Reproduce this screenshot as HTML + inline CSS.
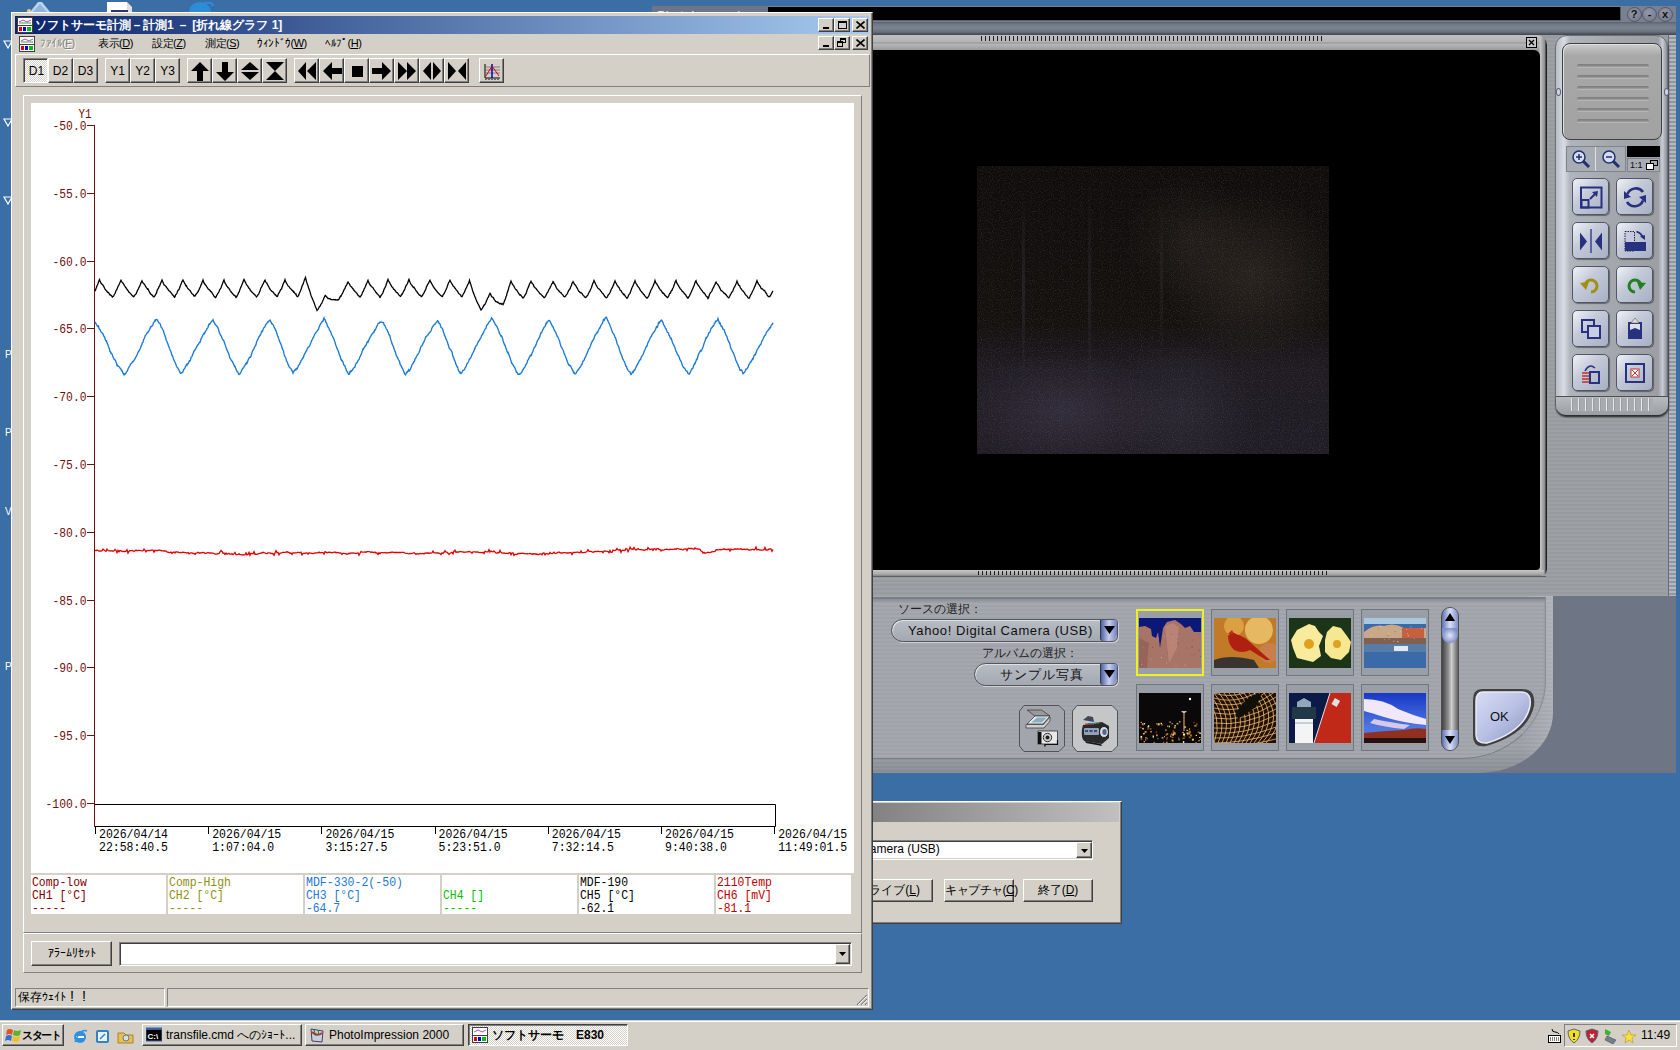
<!DOCTYPE html><html><head><meta charset="utf-8"><style>
*{margin:0;padding:0;box-sizing:border-box}
html,body{width:1680px;height:1050px;overflow:hidden;background:#3A6EA5;font-family:"Liberation Sans",sans-serif;font-size:12px;color:#000}
.a{position:absolute}
.face{background:#D4D0C8}
.raised{border-style:solid;border-width:1px;border-color:#fff #404040 #404040 #fff;box-shadow:inset -1px -1px #808080, inset 1px 1px #D4D0C8}
.btn{position:absolute;background:#D4D0C8;border:1px solid;border-color:#fff #404040 #404040 #fff;box-shadow:inset -1px -1px #808080}
.sunk{border:1px solid;border-color:#808080 #fff #fff #808080;box-shadow:inset 1px 1px #404040, inset -1px -1px #D4D0C8}
.thin{border:1px solid;border-color:#808080 #fff #fff #808080}
.mono{font-family:"Liberation Mono",monospace}
.tb{position:absolute;top:58px;width:25px;height:25px;background:#D4D0C8;border:1px solid;border-color:#fff #404040 #404040 #fff;box-shadow:inset -1px -1px #808080}
.tb svg{position:absolute;left:2px;top:2px}
.cap{position:absolute;width:16px;height:14px;background:#D4D0C8;border:1px solid;border-color:#fff #404040 #404040 #fff;box-shadow:inset -1px -1px #808080}
</style></head><body>
<svg class="a" style="left:0;top:0" width="660" height="14">
 <polygon points="30,12 38,2 42,2 50,12" fill="#B8D4F0"/><polygon points="33,12 40,4 47,12" fill="#8FB4E0"/>
 <circle cx="29" cy="11" r="2" fill="#E8D080"/>
 <rect x="107" y="2" width="20" height="10" fill="#fff"/><polygon points="127,2 132,7 132,12 127,12" fill="#E0E0E0"/>
 <rect x="111" y="10" width="17" height="2" fill="#303080"/>
 <path d="M189,12 A11,10 0 0 1 211,12 Z" fill="#2C8CD8"/><path d="M200,5 Q212,0 213,6" stroke="#2C8CD8" stroke-width="2" fill="none"/>
</svg>
<svg class="a" style="left:3px;top:39px" width="10" height="10"><path d="M1,2 H9 L5,9 Z" fill="none" stroke="#fff" stroke-width="1.2"/></svg><svg class="a" style="left:3px;top:117px" width="10" height="10"><path d="M1,2 H9 L5,9 Z" fill="none" stroke="#fff" stroke-width="1.2"/></svg><svg class="a" style="left:3px;top:195px" width="10" height="10"><path d="M1,2 H9 L5,9 Z" fill="none" stroke="#fff" stroke-width="1.2"/></svg><div class="a" style="left:5px;top:349px;color:#fff;font-size:10px;line-height:12px">P</div><div class="a" style="left:5px;top:427px;color:#fff;font-size:10px;line-height:12px">P</div><div class="a" style="left:5px;top:506px;color:#fff;font-size:10px;line-height:12px">V</div><div class="a" style="left:5px;top:661px;color:#fff;font-size:10px;line-height:12px">P</div><div class="a" style="left:652px;top:6px;width:117px;height:10px;background:#6E7686;color:#E0E0E0;font-size:13px;line-height:19px;padding-left:5px;overflow:hidden;white-space:nowrap">PhotoImpression</div><div class="a" style="left:768px;top:6px;width:908px;height:590px;background:repeating-linear-gradient(180deg,rgba(255,255,255,0.025) 0 2px,rgba(0,0,0,0.025) 2px 4px),#9B9EA3"></div><div class="a" style="left:768px;top:6px;width:908px;height:16px;background:#7A8090"></div><div class="a" style="left:768px;top:7px;width:853px;height:14px;background:#000;border-right:1px solid #505868;border-bottom:1px solid #5A6272"></div><div class="a" style="left:1626.5px;top:7px;width:15px;height:15px;border-radius:50%;background:radial-gradient(circle at 40% 35%,#9298A8,#707688);border:1px solid #505868;color:#101010;font-weight:bold;font-size:11px;line-height:13px;text-align:center">?</div><div class="a" style="left:1642.0px;top:7px;width:15px;height:15px;border-radius:50%;background:radial-gradient(circle at 40% 35%,#9298A8,#707688);border:1px solid #505868;color:#101010;font-weight:bold;font-size:11px;line-height:13px;text-align:center">-</div><div class="a" style="left:1657.5px;top:7px;width:15px;height:15px;border-radius:50%;background:radial-gradient(circle at 40% 35%,#9298A8,#707688);border:1px solid #505868;color:#101010;font-weight:bold;font-size:11px;line-height:13px;text-align:center">x</div><div class="a" style="left:768px;top:22px;width:908px;height:13px;background:linear-gradient(#5A606C 0,#6E7684 15%,#7C8490 45%,#6A7280 75%,#3E444E 100%)"></div><div class="a" style="left:768px;top:35px;width:779px;height:542px;border-radius:0 10px 8px 0;background:linear-gradient(90deg,rgba(0,0,0,0) 0,rgba(0,0,0,0) 771px,#C8C8C8 772px,#8A8A8A 777px,#202020 778px),linear-gradient(#C0C0C0 0,#B4B4B4 7px,#909090 8px,#B8B8B8 9px,#9A9A9A 15px)"></div><div class="a" style="left:768px;top:50px;width:772px;height:520px;background:#000;border-radius:0 6px 4px 0"></div><div class="a" style="left:768px;top:570px;width:776px;height:7px;background:linear-gradient(#C8C8C8,#A8A8A8 60%,#707070);border-radius:0 0 6px 0"></div><div class="a" style="left:981px;top:36px;width:343px;height:5px;background:repeating-linear-gradient(90deg,#202020 0 1px,transparent 1px 4px)"></div><div class="a" style="left:978px;top:571px;width:352px;height:4px;background:repeating-linear-gradient(90deg,#202020 0 1px,transparent 1px 4px)"></div><svg class="a" style="left:1526px;top:37px" width="12" height="11"><rect x="0.5" y="0.5" width="10" height="10" fill="#C8C8C8" stroke="#000"/><path d="M3,3 L8,8 M8,3 L3,8" stroke="#000" stroke-width="1.3"/></svg><div class="a" style="left:977px;top:166px;width:352px;height:288px;background:radial-gradient(ellipse 30% 20% at 25% 85%,rgba(64,58,78,0.55),rgba(0,0,0,0)),radial-gradient(ellipse 20% 25% at 58% 85%,rgba(56,52,68,0.45),rgba(0,0,0,0)),radial-gradient(ellipse 25% 30% at 78% 38%,rgba(54,46,40,0.6),rgba(0,0,0,0)),radial-gradient(ellipse 18% 22% at 60% 25%,rgba(44,38,34,0.5),rgba(0,0,0,0)),linear-gradient(#0E0B0A,#13100E 55%,#1E1A20 70%,#201C24)"></div><svg class="a" style="left:977px;top:166px" width="352" height="288"><filter id="nz"><feTurbulence type="fractalNoise" baseFrequency="0.9" numOctaves="1" seed="3"/><feColorMatrix values="0 0 0 0 0.3  0 0 0 0 0.28  0 0 0 0 0.34  0 0 0 1.6 -0.75"/></filter><rect width="352" height="288" filter="url(#nz)" opacity="0.35"/></svg><div class="a" style="left:1022px;top:190px;width:3px;height:200px;background:linear-gradient(rgba(60,66,80,0),rgba(60,66,80,0.35),rgba(60,66,80,0))"></div><div class="a" style="left:1088px;top:175px;width:3px;height:230px;background:linear-gradient(rgba(60,60,70,0),rgba(60,60,70,0.3),rgba(60,60,70,0))"></div><div class="a" style="left:1160px;top:200px;width:3px;height:160px;background:linear-gradient(rgba(60,55,50,0),rgba(60,55,50,0.3),rgba(60,55,50,0))"></div><div class="a" style="left:1668px;top:35px;width:1px;height:561px;background:#6A6E76"></div><div class="a" style="left:1669px;top:35px;width:7px;height:561px;background:repeating-linear-gradient(180deg,#B4B8C0 0 2px,#9098A0 2px 4px)"></div><div class="a" style="left:1555px;top:35px;width:113px;height:380px;border-radius:12px 12px 10px 10px;background:linear-gradient(90deg,#B8BCC4,#D8DCE4 8px,#B0B4BC 14px,#A4A8AE 50%,#9C9EA4 92%,#C8CCD4 96%,#888C94);border:1px solid #707070;box-shadow:1px 2px 2px rgba(0,0,0,0.45)"></div><div class="a" style="left:1562px;top:43px;width:100px;height:97px;border-radius:8px;background:linear-gradient(#CCCCCC,#A8A8A8 12%,#A2A2A2);border:1px solid #404040;box-shadow:inset 1px 1px #E0E0E0"></div><div class="a" style="left:1577px;top:64px;width:72px;height:4px;border-radius:2px;background:linear-gradient(#7C7C7C,#8C8C8C 50%,#C4C4C4)"></div><div class="a" style="left:1577px;top:75px;width:72px;height:4px;border-radius:2px;background:linear-gradient(#7C7C7C,#8C8C8C 50%,#C4C4C4)"></div><div class="a" style="left:1577px;top:86px;width:72px;height:4px;border-radius:2px;background:linear-gradient(#7C7C7C,#8C8C8C 50%,#C4C4C4)"></div><div class="a" style="left:1577px;top:97px;width:72px;height:4px;border-radius:2px;background:linear-gradient(#7C7C7C,#8C8C8C 50%,#C4C4C4)"></div><div class="a" style="left:1577px;top:108px;width:72px;height:4px;border-radius:2px;background:linear-gradient(#7C7C7C,#8C8C8C 50%,#C4C4C4)"></div><div class="a" style="left:1577px;top:119px;width:72px;height:4px;border-radius:2px;background:linear-gradient(#7C7C7C,#8C8C8C 50%,#C4C4C4)"></div><div class="a" style="left:1556px;top:88px;width:5px;height:8px;border-radius:50%;background:#D0D4E8;border:1px solid #606070"></div><div class="a" style="left:1664px;top:88px;width:5px;height:8px;border-radius:50%;background:#D0D4E8;border:1px solid #606070"></div><div class="a" style="left:1566px;top:146px;width:60px;height:26px;background:#A8ACB4;border:1px solid #80848C"></div><div class="a" style="left:1595px;top:147px;width:1px;height:24px;background:#E0E0E0"></div><svg class="a" style="left:1568px;top:148px" width="58" height="24"><g fill="none" stroke="#203070" stroke-width="1.5"><circle cx="11" cy="9" r="6" fill="#D8DCF0"/><path d="M15,13 L21,19" stroke-width="3"/><path d="M8,9 H14 M11,6 V12"/><circle cx="41" cy="9" r="6" fill="#D8DCF0"/><path d="M45,13 L51,19" stroke-width="3"/><path d="M38,9 H44"/></g></svg><div class="a" style="left:1627px;top:146px;width:33px;height:11px;background:#000"></div><div class="a" style="left:1627px;top:158px;width:33px;height:14px;background:#A8ACB4;border:1px solid #80848C;font-size:9px;line-height:12px;color:#101010;padding-left:2px">1:1</div><svg class="a" style="left:1646px;top:160px" width="12" height="10"><rect x="4.5" y="0.5" width="7" height="5" fill="none" stroke="#000"/><rect x="0.5" y="3.5" width="7" height="6" fill="#fff" stroke="#000" stroke-width="1"/></svg><div class="a" style="left:1572px;top:178px;width:37px;height:37px;border-radius:5px;background:linear-gradient(135deg,#F0F2F8,#C4CAD8 40%,#A8B0C4);border:1px solid #505868;box-shadow:1px 1px 1px rgba(0,0,0,0.4)"><svg class="a" style="left:4px;top:4px" width="28" height="28"><rect x="4" y="4.5" width="20.5" height="20" fill="none" stroke="#283080" stroke-width="2"/><rect x="4.5" y="17" width="7" height="7.5" fill="none" stroke="#283080" stroke-width="2"/><path d="M13,16 L19.5,9.5" stroke="#283080" stroke-width="2"/><path d="M21,8 L15,9 L20,14 Z" fill="#283080"/></svg></div><div class="a" style="left:1616px;top:178px;width:37px;height:37px;border-radius:5px;background:linear-gradient(135deg,#F0F2F8,#C4CAD8 40%,#A8B0C4);border:1px solid #505868;box-shadow:1px 1px 1px rgba(0,0,0,0.4)"><svg class="a" style="left:4px;top:4px" width="28" height="28"><path d="M6.5,11 A9,9 0 0 1 22,9" stroke="#283080" stroke-width="2.6" fill="none"/><path d="M22,17.5 A9,9 0 0 1 6,19" stroke="#283080" stroke-width="2.6" fill="none"/><path d="M3,8 L10,14 L3,16 Z M25,20 L18,14 L25,12 Z" fill="#283080"/></svg></div><div class="a" style="left:1572px;top:222px;width:37px;height:37px;border-radius:5px;background:linear-gradient(135deg,#F0F2F8,#C4CAD8 40%,#A8B0C4);border:1px solid #505868;box-shadow:1px 1px 1px rgba(0,0,0,0.4)"><svg class="a" style="left:4px;top:4px" width="28" height="28"><path d="M3,5.5 L10,14.5 L3,23.5 Z M25,5.5 L18,14.5 L25,23.5 Z" fill="#283080"/><path d="M14,2 V26" stroke="#283080" stroke-width="1.3"/></svg></div><div class="a" style="left:1616px;top:222px;width:37px;height:37px;border-radius:5px;background:linear-gradient(135deg,#F0F2F8,#C4CAD8 40%,#A8B0C4);border:1px solid #505868;box-shadow:1px 1px 1px rgba(0,0,0,0.4)"><svg class="a" style="left:4px;top:4px" width="28" height="28"><rect x="4" y="4.5" width="9.5" height="19.5" fill="#C8C8E0" stroke="#101030" stroke-width="0.9" stroke-dasharray="1.5 1"/><rect x="4" y="15" width="21" height="9" fill="#283080"/><path d="M15.5,4.5 Q20,6 22,10" stroke="#283080" stroke-width="1.8" fill="none"/><path d="M24,13 L19,9.5 L24,8 Z" fill="#283080"/></svg></div><div class="a" style="left:1572px;top:266px;width:37px;height:37px;border-radius:5px;background:linear-gradient(135deg,#F0F2F8,#C4CAD8 40%,#A8B0C4);border:1px solid #505868;box-shadow:1px 1px 1px rgba(0,0,0,0.4)"><svg class="a" style="left:4px;top:4px" width="28" height="28"><path d="M8,15 A6,6 0 1 1 14,21" stroke="#A09010" stroke-width="3" fill="none"/><path d="M3,12 L9,19 L12,11 Z" fill="#A09010"/></svg></div><div class="a" style="left:1616px;top:266px;width:37px;height:37px;border-radius:5px;background:linear-gradient(135deg,#F0F2F8,#C4CAD8 40%,#A8B0C4);border:1px solid #505868;box-shadow:1px 1px 1px rgba(0,0,0,0.4)"><svg class="a" style="left:4px;top:4px" width="28" height="28"><path d="M20,15 A6,6 0 1 0 14,21" stroke="#208020" stroke-width="3" fill="none"/><path d="M25,12 L19,19 L16,11 Z" fill="#208020"/></svg></div><div class="a" style="left:1572px;top:310px;width:37px;height:37px;border-radius:5px;background:linear-gradient(135deg,#F0F2F8,#C4CAD8 40%,#A8B0C4);border:1px solid #505868;box-shadow:1px 1px 1px rgba(0,0,0,0.4)"><svg class="a" style="left:4px;top:4px" width="28" height="28"><rect x="5" y="5" width="12" height="12" fill="none" stroke="#283080" stroke-width="2"/><rect x="11" y="11" width="12" height="12" fill="#C8CCE4" stroke="#283080" stroke-width="2"/></svg></div><div class="a" style="left:1616px;top:310px;width:37px;height:37px;border-radius:5px;background:linear-gradient(135deg,#F0F2F8,#C4CAD8 40%,#A8B0C4);border:1px solid #505868;box-shadow:1px 1px 1px rgba(0,0,0,0.4)"><svg class="a" style="left:4px;top:4px" width="28" height="28"><rect x="7" y="7" width="14" height="17" fill="#283080"/><polygon points="9,9 19,9 19,15 14,13 9,15" fill="#E0E0E8"/><polygon points="10,8 14,3 18,8" fill="#E0E0E0" stroke="#707070" stroke-width="0.7"/></svg></div><div class="a" style="left:1572px;top:354px;width:37px;height:37px;border-radius:5px;background:linear-gradient(135deg,#F0F2F8,#C4CAD8 40%,#A8B0C4);border:1px solid #505868;box-shadow:1px 1px 1px rgba(0,0,0,0.4)"><svg class="a" style="left:4px;top:4px" width="28" height="28"><rect x="13" y="13" width="9" height="11" fill="none" stroke="#283080" stroke-width="2"/><path d="M5,14 H12 M5,17 H12 M5,20 H12 M5,23 H12" stroke="#C03030" stroke-width="1.5"/><path d="M8,12 Q12,4 18,9" stroke="#283080" stroke-width="1.5" fill="none"/></svg></div><div class="a" style="left:1616px;top:354px;width:37px;height:37px;border-radius:5px;background:linear-gradient(135deg,#F0F2F8,#C4CAD8 40%,#A8B0C4);border:1px solid #505868;box-shadow:1px 1px 1px rgba(0,0,0,0.4)"><svg class="a" style="left:4px;top:4px" width="28" height="28"><rect x="5" y="5" width="18" height="18" fill="none" stroke="#283080" stroke-width="2"/><rect x="10" y="10" width="8" height="8" fill="#fff" stroke="#C03030"/><path d="M11,11 L17,17 M17,11 L11,17" stroke="#C03030"/></svg></div><div class="a" style="left:1556px;top:396px;width:112px;height:19px;border-radius:0 0 10px 10px;background:linear-gradient(#B8BCC0,#9A9EA2);border-top:1px solid #505050;box-shadow:0 2px 2px rgba(0,0,0,0.5)"></div><div class="a" style="left:1571px;top:398px;width:82px;height:13px;background:repeating-linear-gradient(90deg,#E8E8E8 0 1px,#9A9EA2 1px 2px,#A8ACB0 2px 7px)"></div><div class="a" style="left:1380px;top:596px;width:296px;height:177px;background:#6E7585"></div><div class="a" style="left:768px;top:596px;width:785px;height:177px;border-radius:0 0 75px 0 / 0 0 60px 0;background:repeating-linear-gradient(180deg,rgba(255,255,255,0.025) 0 2px,rgba(0,0,0,0.025) 2px 4px),linear-gradient(90deg,rgba(0,0,0,0) 96%,rgba(255,255,255,0.15)),linear-gradient(#A4A8AE,#9EA2A8 85%,#8A8E96)"></div><div class="a" style="left:768px;top:597px;width:778px;height:162px;border-radius:0 0 85px 0 / 0 0 78px 0;background:repeating-linear-gradient(180deg,rgba(255,255,255,0.025) 0 2px,rgba(0,0,0,0.025) 2px 4px),#A3A6AC;border-top:2px solid #7A7E86;border-bottom:1px solid #7A7E86;border-right:1px solid #8A8E96;box-shadow:inset 0 2px 2px rgba(0,0,0,0.15)"></div><div class="a" style="left:768px;top:576px;width:778px;height:1px;background:#606060"></div><div class="a" style="left:898px;top:602px;font-size:12px;line-height:14px;color:#202020;white-space:nowrap">ソースの選択：</div><div class="a" style="left:891px;top:619px;width:227px;height:23px;border-radius:12px 4px 6px 12px;background:linear-gradient(#B8BCC4,#A4A8B0);border:1px solid #505560;box-shadow:inset 1px 1px #E0E0E0, 1px 1px #D0D0D0;font-size:13px;line-height:21px;padding-left:16px;letter-spacing:0.6px;color:#101010;white-space:nowrap">Yahoo! Digital Camera (USB)</div><div class="a" style="left:982px;top:646px;font-size:12px;line-height:14px;color:#202020;white-space:nowrap">アルバムの選択：</div><div class="a" style="left:974px;top:663px;width:144px;height:23px;border-radius:12px 4px 6px 12px;background:linear-gradient(#B8BCC4,#A4A8B0);border:1px solid #505560;box-shadow:inset 1px 1px #E0E0E0, 1px 1px #D0D0D0;font-size:13px;line-height:21px;padding-left:25px;letter-spacing:1px;color:#101010;white-space:nowrap">サンプル写真</div><div class="a" style="left:1100px;top:620px;width:17px;height:21px;border-radius:0 3px 8px 3px;background:linear-gradient(90deg,#5060A0,#C8D0F0 50%,#7080C0);border-left:1px solid #303848"><svg class="a" style="left:3px;top:6px" width="11" height="8"><path d="M0,0 H11 L5.5,8 Z" fill="#000"/></svg></div><div class="a" style="left:1100px;top:664px;width:17px;height:21px;border-radius:0 3px 8px 3px;background:linear-gradient(90deg,#5060A0,#C8D0F0 50%,#7080C0);border-left:1px solid #303848"><svg class="a" style="left:3px;top:6px" width="11" height="8"><path d="M0,0 H11 L5.5,8 Z" fill="#000"/></svg></div><svg class="a" style="left:1019px;top:705px" width="46" height="47"><path d="M5,0.5 H40 L45.5,6 V41 L40,46.5 H5 L0.5,41 V6 Z" fill="#A2A6AC" stroke="#505458"/><polygon points="8,5 22.5,5 31,11 16,11" fill="#9A9A9A" stroke="#404040" stroke-width="0.8"/><polygon points="16,11 31,11 24,19 8,19" fill="#E8ECEE" stroke="#404040" stroke-width="0.8"/><polygon points="18,12.5 28,12.5 23,17.5 12,17.5" fill="#8AB0C0"/><path d="M7,19.5 H24.5 L31,12 V16 L25,23 H7 Z" fill="#D0D0D0" stroke="#404040" stroke-width="0.8"/><rect x="19" y="26" width="19.5" height="13" fill="#E8E8E8" stroke="#303030" stroke-width="0.8"/><rect x="19" y="27" width="3.5" height="12" fill="#101010"/><circle cx="28.5" cy="32.5" r="4.2" fill="#D0D0D0" stroke="#303030"/><circle cx="28.5" cy="32.5" r="2" fill="#202020"/><path d="M38.5,35 V39.5 H26 V41 H25" stroke="#101010" fill="none" stroke-width="1.2"/></svg><svg class="a" style="left:1072px;top:705px" width="46" height="47"><path d="M5,0.5 H40 L45.5,6 V41 L40,46.5 H5 L0.5,41 V6 Z" fill="#C4C6C8" stroke="#505458"/><path d="M11,20 L30,17 L37,21 L37,33 L30,39 L12,36 Q9,33 10,24 Z" fill="#2A2A2A"/><rect x="12" y="23" width="15" height="7" rx="1" fill="#90A0B8"/><path d="M13,26 H26" stroke="#203060" stroke-width="1.5" stroke-dasharray="3 1.5"/><ellipse cx="32" cy="27" rx="4.5" ry="5.5" fill="#D8DCE4" stroke="#202020"/><ellipse cx="32.5" cy="27" rx="2.2" ry="3" fill="#506890"/><path d="M11,15 L16,11 L21,12 L22,17 Z" fill="#404850"/><path d="M13,19 H22" stroke="#C04040" stroke-width="1.2"/><path d="M16,18.5 H24" stroke="#4070C0" stroke-width="1"/><path d="M22,18 H27" stroke="#40A040" stroke-width="1"/><path d="M13,36 L29,39 L30,41 L14,38 Z" fill="#181818"/></svg><div class="a" style="left:1136px;top:609px;width:68px;height:67px;background:#9A9EA6;border:2px solid #F0F020"></div><svg class="a" style="left:1139px;top:618px" width="62" height="50"><rect width="62" height="50" fill="#0C1878"/><path d="M0,9 L6,8 L12,11 L13,18 L17,20 L19,14 L21,30 L24,10 L28,4 L36,2 L42,6 L46,10 L51,8 L55,14 L62,14 V50 H0 Z" fill="#A87468"/><path d="M26,8 L34,5 L40,10 L38,30 L30,45 Z" fill="#C08A7C" opacity="0.7"/><path d="M0,20 L10,25 L8,50 H0 Z" fill="#8A5A50" opacity="0.6"/><rect x="28.0" y="34.6" width="1.1" height="0.8" fill="#905C50"/><rect x="53.0" y="21.6" width="1.1" height="0.8" fill="#905C50"/><rect x="49.2" y="18.3" width="0.7" height="0.6" fill="#905C50"/><rect x="39.3" y="35.8" width="0.8" height="0.8" fill="#905C50"/><rect x="38.2" y="20.5" width="0.5" height="0.9" fill="#7A4A40"/><rect x="2.2" y="45.8" width="0.9" height="1.0" fill="#D0A090"/><rect x="27.3" y="44.5" width="0.9" height="0.9" fill="#D0A090"/><rect x="0.3" y="18.0" width="1.0" height="0.8" fill="#905C50"/><rect x="61.7" y="44.4" width="1.0" height="0.7" fill="#7A4A40"/><rect x="31.8" y="16.0" width="0.9" height="0.6" fill="#7A4A40"/><rect x="52.5" y="28.5" width="1.2" height="1.1" fill="#7A4A40"/><rect x="13.2" y="47.4" width="0.5" height="0.8" fill="#905C50"/><rect x="24.6" y="17.6" width="0.9" height="1.0" fill="#D0A090"/><rect x="20.9" y="25.9" width="0.5" height="0.8" fill="#7A4A40"/><rect x="8.3" y="39.7" width="0.5" height="0.8" fill="#D0A090"/><rect x="11.0" y="34.6" width="0.8" height="0.6" fill="#905C50"/><rect x="47.7" y="29.7" width="0.8" height="0.8" fill="#7A4A40"/><rect x="0.0" y="45.3" width="1.2" height="0.9" fill="#7A4A40"/><rect x="13.1" y="28.8" width="1.1" height="0.9" fill="#7A4A40"/><rect x="2.6" y="20.1" width="0.8" height="0.5" fill="#905C50"/><rect x="20.4" y="25.4" width="0.6" height="0.6" fill="#905C50"/><rect x="39.5" y="15.5" width="0.8" height="0.9" fill="#7A4A40"/><rect x="59.5" y="31.9" width="0.9" height="1.1" fill="#7A4A40"/><rect x="38.9" y="25.9" width="0.7" height="0.9" fill="#905C50"/><rect x="11.8" y="40.9" width="1.2" height="0.6" fill="#D0A090"/><rect x="54.7" y="36.1" width="0.8" height="0.6" fill="#7A4A40"/><rect x="31.8" y="23.9" width="1.0" height="0.8" fill="#D0A090"/><rect x="51.1" y="35.9" width="0.7" height="0.6" fill="#905C50"/><rect x="60.6" y="19.4" width="0.8" height="1.0" fill="#905C50"/><rect x="38.1" y="24.8" width="1.1" height="0.6" fill="#7A4A40"/><rect x="4.3" y="29.4" width="0.7" height="0.5" fill="#D0A090"/><rect x="22.9" y="35.0" width="0.6" height="0.8" fill="#D0A090"/><rect x="60.8" y="38.0" width="1.0" height="0.9" fill="#7A4A40"/><rect x="36.6" y="47.3" width="0.8" height="0.8" fill="#D0A090"/><rect x="59.7" y="15.7" width="0.9" height="0.8" fill="#905C50"/><rect x="19.3" y="19.8" width="0.6" height="0.8" fill="#D0A090"/><rect x="45.7" y="46.5" width="1.0" height="1.0" fill="#D0A090"/><rect x="21.8" y="39.0" width="1.1" height="1.1" fill="#D0A090"/><rect x="58.5" y="16.1" width="0.8" height="0.5" fill="#905C50"/><rect x="23.7" y="35.4" width="0.9" height="0.6" fill="#905C50"/></svg><div class="a" style="left:1211px;top:609px;width:68px;height:67px;background:#9A9EA6;border:1px solid #70747C"></div><svg class="a" style="left:1214px;top:618px" width="62" height="50"><rect width="62" height="50" fill="#C07A28"/><circle cx="45" cy="12" r="14" fill="#F0C870" opacity="0.8"/><circle cx="20" cy="8" r="10" fill="#E8B050" opacity="0.7"/><circle cx="55" cy="35" r="10" fill="#D08060" opacity="0.6"/><path d="M0,42 Q15,36 40,42 L45,50 H0 Z" fill="#3A3430"/><path d="M14,18 Q18,12 22,16 Q30,18 38,26 L56,42 L52,42 L36,32 Q28,36 20,32 Q14,26 14,18 Z" fill="#B02010"/><path d="M14,16 L18,12 L20,16 Z" fill="#C02818"/></svg><div class="a" style="left:1286px;top:609px;width:68px;height:67px;background:#9A9EA6;border:1px solid #70747C"></div><svg class="a" style="left:1289px;top:618px" width="62" height="50"><rect width="62" height="50" fill="#1C3418"/><path d="M20,6 L26,8 L30,14 L34,18 L30,28 L32,38 L24,44 L16,42 L8,40 L4,30 L2,22 L8,12 Z" fill="#F8EC9C"/><path d="M44,8 L52,10 L58,18 L62,24 L60,34 L52,42 L42,40 L36,34 L36,22 L38,14 Z" fill="#F6E890"/><circle cx="20" cy="26" r="5" fill="#E0A020"/><circle cx="48" cy="26" r="4" fill="#E0A020"/></svg><div class="a" style="left:1361px;top:609px;width:68px;height:67px;background:#9A9EA6;border:1px solid #70747C"></div><svg class="a" style="left:1364px;top:618px" width="62" height="50"><rect width="62" height="50" fill="#3A6AA8"/><rect width="62" height="6" fill="#A8C8E0"/><path d="M0,14 Q10,6 20,8 Q30,4 40,10 L62,10 V24 H0 Z" fill="#C8A888"/><rect x="38" y="10" width="22" height="12" fill="#C86040"/><rect x="0" y="20" width="62" height="6" fill="#806050"/><path d="M0,26 H62 V34 H0 Z" fill="#6080A8" opacity="0.8"/><rect x="30" y="28" width="14" height="5" fill="#E0E8F0"/><rect x="7.2" y="12.1" width="0.8" height="0.7" fill="#E0C0A0"/><rect x="43.0" y="15.3" width="0.8" height="0.9" fill="#E0C0A0"/><rect x="46.5" y="8.5" width="0.9" height="0.8" fill="#F0E0C0"/><rect x="59.4" y="9.8" width="1.0" height="1.0" fill="#A07050"/><rect x="15.9" y="8.2" width="0.7" height="1.0" fill="#F0E0C0"/><rect x="32.1" y="20.1" width="0.7" height="1.2" fill="#A07050"/><rect x="55.3" y="13.2" width="1.0" height="0.6" fill="#A07050"/><rect x="49.8" y="20.1" width="0.6" height="0.6" fill="#F0E0C0"/><rect x="36.2" y="13.1" width="0.6" height="0.8" fill="#F0E0C0"/><rect x="44.1" y="23.2" width="0.7" height="0.6" fill="#A07050"/><rect x="29.2" y="22.8" width="1.1" height="0.8" fill="#E0C0A0"/><rect x="30.6" y="13.0" width="1.1" height="1.2" fill="#A07050"/><rect x="19.9" y="21.3" width="0.7" height="0.9" fill="#E0C0A0"/><rect x="43.9" y="17.1" width="0.7" height="1.1" fill="#F0E0C0"/><rect x="39.7" y="14.5" width="0.6" height="1.0" fill="#A07050"/><rect x="14.7" y="10.3" width="0.5" height="0.9" fill="#A07050"/><rect x="6.8" y="16.6" width="0.9" height="0.8" fill="#F0E0C0"/><rect x="42.4" y="11.2" width="0.8" height="0.6" fill="#F0E0C0"/><rect x="46.8" y="16.6" width="0.5" height="0.7" fill="#A07050"/><rect x="33.5" y="23.1" width="0.9" height="1.2" fill="#F0E0C0"/><rect x="24.4" y="20.7" width="1.1" height="0.6" fill="#E0C0A0"/><rect x="24.1" y="15.2" width="0.6" height="1.1" fill="#F0E0C0"/><rect x="23.4" y="17.1" width="1.1" height="1.1" fill="#A07050"/><rect x="28.7" y="18.4" width="0.6" height="1.0" fill="#E0C0A0"/><rect x="57.3" y="10.0" width="0.7" height="0.8" fill="#F0E0C0"/></svg><div class="a" style="left:1136px;top:684px;width:68px;height:67px;background:#9A9EA6;border:1px solid #70747C"></div><svg class="a" style="left:1139px;top:693px" width="62" height="50"><rect width="62" height="50" fill="#0A0808"/><circle cx="51" cy="6" r="1.2" fill="#fff"/><path d="M42,18 H48 L46,20 H44 Z" fill="#C0C0A0"/><rect x="44" y="20" width="2" height="18" fill="#806040"/><rect x="60.6" y="39.8" width="1.9" height="1.2" fill="#F0C040"/><rect x="21.6" y="29.8" width="1.4" height="1.6" fill="#FFF0A0"/><rect x="30.2" y="28.6" width="1.9" height="0.9" fill="#F0C040"/><rect x="10.7" y="35.4" width="1.9" height="1.0" fill="#E08020"/><rect x="62.0" y="47.8" width="1.5" height="1.7" fill="#A06010"/><rect x="58.6" y="38.8" width="2.1" height="0.9" fill="#E08020"/><rect x="27.2" y="40.3" width="2.0" height="1.6" fill="#E08020"/><rect x="32.4" y="46.6" width="1.6" height="1.2" fill="#A06010"/><rect x="59.2" y="47.1" width="1.7" height="1.2" fill="#E08020"/><rect x="60.0" y="39.5" width="1.6" height="1.1" fill="#F0C040"/><rect x="31.2" y="41.3" width="0.8" height="2.2" fill="#A06010"/><rect x="33.7" y="49.8" width="1.0" height="0.9" fill="#E08020"/><rect x="4.1" y="39.9" width="1.4" height="2.1" fill="#A06010"/><rect x="16.7" y="38.4" width="1.0" height="1.4" fill="#A06010"/><rect x="32.5" y="30.4" width="1.4" height="0.8" fill="#FFF0A0"/><rect x="8.0" y="45.1" width="0.8" height="1.1" fill="#E08020"/><rect x="0.7" y="34.2" width="1.8" height="1.1" fill="#A06010"/><rect x="6.5" y="44.1" width="1.0" height="1.5" fill="#FFF0A0"/><rect x="44.5" y="43.4" width="2.0" height="0.8" fill="#A06010"/><rect x="51.2" y="41.5" width="1.6" height="2.0" fill="#E08020"/><rect x="32.8" y="46.7" width="1.7" height="2.0" fill="#E08020"/><rect x="56.7" y="41.8" width="1.3" height="1.1" fill="#FFF0A0"/><rect x="55.2" y="32.3" width="1.9" height="1.1" fill="#F0C040"/><rect x="8.3" y="33.3" width="1.8" height="1.2" fill="#F0C040"/><rect x="27.0" y="48.7" width="1.6" height="1.8" fill="#E08020"/><rect x="25.0" y="43.1" width="0.8" height="1.1" fill="#FFF0A0"/><rect x="56.5" y="49.3" width="1.0" height="1.5" fill="#FFF0A0"/><rect x="31.2" y="43.1" width="1.1" height="0.9" fill="#F0C040"/><rect x="1.5" y="44.8" width="1.7" height="2.1" fill="#A06010"/><rect x="9.1" y="32.1" width="1.1" height="2.0" fill="#FFF0A0"/><rect x="57.5" y="30.1" width="0.9" height="2.1" fill="#A06010"/><rect x="4.8" y="30.1" width="1.3" height="1.4" fill="#FFF0A0"/><rect x="26.7" y="41.2" width="0.8" height="1.8" fill="#E08020"/><rect x="11.2" y="38.0" width="1.8" height="1.4" fill="#E08020"/><rect x="37.5" y="30.1" width="1.9" height="1.3" fill="#F0C040"/><rect x="49.7" y="43.5" width="2.0" height="1.7" fill="#A06010"/><rect x="35.3" y="32.2" width="1.6" height="1.3" fill="#FFF0A0"/><rect x="17.3" y="30.6" width="1.8" height="1.0" fill="#A06010"/><rect x="8.3" y="35.3" width="1.6" height="1.3" fill="#A06010"/><rect x="47.4" y="36.9" width="1.8" height="0.9" fill="#FFF0A0"/><rect x="18.7" y="30.2" width="2.0" height="2.2" fill="#F0C040"/><rect x="14.4" y="48.8" width="1.7" height="1.3" fill="#A06010"/><rect x="35.3" y="39.7" width="1.3" height="2.2" fill="#E08020"/><rect x="43.5" y="44.8" width="2.2" height="0.8" fill="#F0C040"/><rect x="45.8" y="33.6" width="1.4" height="0.9" fill="#E08020"/><rect x="40.2" y="28.2" width="1.2" height="1.2" fill="#FFF0A0"/><rect x="34.1" y="39.2" width="2.2" height="1.6" fill="#F0C040"/><rect x="39.6" y="45.8" width="0.9" height="1.6" fill="#F0C040"/><rect x="24.0" y="48.6" width="1.3" height="2.2" fill="#A06010"/><rect x="33.6" y="41.1" width="1.4" height="1.5" fill="#FFF0A0"/><rect x="32.7" y="41.2" width="1.3" height="1.2" fill="#FFF0A0"/><rect x="34.8" y="34.2" width="1.8" height="1.2" fill="#F0C040"/><rect x="47.9" y="40.9" width="1.7" height="1.4" fill="#A06010"/><rect x="3.3" y="34.9" width="1.4" height="1.6" fill="#FFF0A0"/><rect x="4.6" y="47.9" width="1.4" height="1.5" fill="#E08020"/><rect x="2.8" y="30.2" width="1.9" height="2.1" fill="#E08020"/><rect x="60.7" y="46.0" width="1.6" height="1.0" fill="#A06010"/><rect x="28.3" y="32.5" width="0.9" height="1.5" fill="#F0C040"/><rect x="22.5" y="31.1" width="1.4" height="1.6" fill="#A06010"/><rect x="22.6" y="44.4" width="1.9" height="1.0" fill="#FFF0A0"/><rect x="45.5" y="33.2" width="1.0" height="2.0" fill="#FFF0A0"/><rect x="17.0" y="41.4" width="1.8" height="1.8" fill="#E08020"/><rect x="39.3" y="44.6" width="1.1" height="1.1" fill="#E08020"/><rect x="54.5" y="28.9" width="0.9" height="1.2" fill="#A06010"/><rect x="1.7" y="28.8" width="1.1" height="1.2" fill="#F0C040"/><rect x="56.6" y="31.5" width="1.1" height="2.2" fill="#A06010"/><rect x="29.7" y="32.6" width="1.3" height="1.8" fill="#F0C040"/><rect x="49.7" y="37.8" width="2.0" height="2.0" fill="#E08020"/><rect x="27.5" y="44.4" width="1.3" height="1.0" fill="#E08020"/><rect x="40.5" y="49.8" width="1.3" height="1.6" fill="#E08020"/><rect x="26.5" y="36.1" width="0.9" height="2.0" fill="#F0C040"/><rect x="33.7" y="37.5" width="1.6" height="1.9" fill="#A06010"/><rect x="18.5" y="45.1" width="0.9" height="1.1" fill="#F0C040"/><rect x="43.1" y="38.9" width="1.9" height="1.3" fill="#E08020"/><rect x="13.6" y="42.5" width="1.3" height="2.1" fill="#FFF0A0"/><rect x="44.0" y="40.5" width="2.1" height="2.1" fill="#FFF0A0"/><rect x="27.2" y="45.7" width="1.2" height="1.2" fill="#A06010"/><rect x="60.0" y="44.1" width="1.5" height="0.9" fill="#FFF0A0"/><rect x="1.5" y="42.9" width="1.6" height="1.9" fill="#FFF0A0"/><rect x="49.4" y="39.9" width="2.0" height="1.6" fill="#E08020"/><rect x="5.6" y="38.0" width="2.0" height="1.9" fill="#E08020"/><rect x="32.0" y="40.0" width="1.6" height="2.2" fill="#A06010"/><rect x="4.0" y="40.0" width="1.9" height="0.9" fill="#F0C040"/><rect x="17.0" y="30.3" width="1.2" height="0.8" fill="#E08020"/><rect x="6.0" y="46.0" width="1.4" height="1.8" fill="#A06010"/><rect x="47.5" y="39.5" width="1.9" height="1.4" fill="#FFF0A0"/><rect x="50.1" y="35.3" width="1.0" height="1.5" fill="#F0C040"/><rect x="43.9" y="48.1" width="1.4" height="2.0" fill="#FFF0A0"/><rect x="52.9" y="45.7" width="2.0" height="2.0" fill="#F0C040"/><rect x="32.5" y="43.6" width="1.9" height="1.4" fill="#A06010"/></svg><div class="a" style="left:1211px;top:684px;width:68px;height:67px;background:#9A9EA6;border:1px solid #70747C"></div><svg class="a" style="left:1214px;top:693px" width="62" height="50"><rect width="62" height="50" fill="#201008"/><path d="M-10,0 Q10,25 0,50" stroke="#E8A850" stroke-width="0.9" fill="none"/><path d="M-5,0 Q15,25 4,50" stroke="#E8A850" stroke-width="0.9" fill="none"/><path d="M0,0 Q20,25 8,50" stroke="#E8A850" stroke-width="0.9" fill="none"/><path d="M5,0 Q25,25 12,50" stroke="#E8A850" stroke-width="0.9" fill="none"/><path d="M10,0 Q30,25 16,50" stroke="#E8A850" stroke-width="0.9" fill="none"/><path d="M15,0 Q35,25 20,50" stroke="#E8A850" stroke-width="0.9" fill="none"/><path d="M20,0 Q40,25 24,50" stroke="#E8A850" stroke-width="0.9" fill="none"/><path d="M25,0 Q45,25 28,50" stroke="#E8A850" stroke-width="0.9" fill="none"/><path d="M30,0 Q50,25 32,50" stroke="#E8A850" stroke-width="0.9" fill="none"/><path d="M35,0 Q55,25 36,50" stroke="#E8A850" stroke-width="0.9" fill="none"/><path d="M40,0 Q60,25 40,50" stroke="#E8A850" stroke-width="0.9" fill="none"/><path d="M45,0 Q65,25 44,50" stroke="#E8A850" stroke-width="0.9" fill="none"/><path d="M50,0 Q70,25 48,50" stroke="#E8A850" stroke-width="0.9" fill="none"/><path d="M55,0 Q75,25 52,50" stroke="#E8A850" stroke-width="0.9" fill="none"/><path d="M0,0 Q30,10 62,-20" stroke="#F8D080" stroke-width="0.7" fill="none"/><path d="M0,5 Q30,14 62,-14" stroke="#F8D080" stroke-width="0.7" fill="none"/><path d="M0,10 Q30,18 62,-8" stroke="#F8D080" stroke-width="0.7" fill="none"/><path d="M0,15 Q30,22 62,-2" stroke="#F8D080" stroke-width="0.7" fill="none"/><path d="M0,20 Q30,26 62,4" stroke="#F8D080" stroke-width="0.7" fill="none"/><path d="M0,25 Q30,30 62,10" stroke="#F8D080" stroke-width="0.7" fill="none"/><path d="M0,30 Q30,34 62,16" stroke="#F8D080" stroke-width="0.7" fill="none"/><path d="M0,35 Q30,38 62,22" stroke="#F8D080" stroke-width="0.7" fill="none"/><path d="M0,40 Q30,42 62,28" stroke="#F8D080" stroke-width="0.7" fill="none"/><path d="M0,45 Q30,46 62,34" stroke="#F8D080" stroke-width="0.7" fill="none"/><path d="M0,50 Q30,50 62,40" stroke="#F8D080" stroke-width="0.7" fill="none"/><path d="M0,55 Q30,54 62,46" stroke="#F8D080" stroke-width="0.7" fill="none"/><path d="M22,20 Q32,2 48,0 L42,14 Q30,22 24,26 Z" fill="#101008"/></svg><div class="a" style="left:1286px;top:684px;width:68px;height:67px;background:#9A9EA6;border:1px solid #70747C"></div><svg class="a" style="left:1289px;top:693px" width="62" height="50"><rect width="62" height="50" fill="#0C1A48"/><path d="M41,0 L62,0 V50 H25 Z" fill="#C02818"/><path d="M41,0 L25,50" stroke="#F0E0E0" stroke-width="1"/><rect x="44" y="6" width="6" height="7" fill="#E0E0E0" transform="rotate(30 47 9)"/><path d="M3,14 L27,14 L27,26 L3,26 Z" fill="#203848"/><path d="M8,9 L15,5 L22,9 V14 H8 Z" fill="#90A8B8"/><path d="M6,26 L24,26 L24,50 L6,50 Z" fill="#F4F4F4"/><path d="M6,30 H24" stroke="#A0A8B0"/></svg><div class="a" style="left:1361px;top:684px;width:68px;height:67px;background:#9A9EA6;border:1px solid #70747C"></div><svg class="a" style="left:1364px;top:693px" width="62" height="50"><defs><linearGradient id="sk" x1="0" y1="0" x2="0" y2="1"><stop offset="0" stop-color="#1838C8"/><stop offset="0.7" stop-color="#5078E0"/></linearGradient></defs><rect width="62" height="50" fill="url(#sk)"/><path d="M0,6 Q20,6 34,16 Q48,22 62,26 L62,32 Q40,30 20,24 Q8,20 0,18 Z" fill="#F0E8F8"/><path d="M10,26 Q30,30 46,32 L40,36 Q20,34 6,30 Z" fill="#D8C8E8"/><path d="M0,40 Q20,38 40,37 Q52,34 62,36 V50 H0 Z" fill="#903020"/><rect y="45" width="62" height="5" fill="#281010"/></svg><div class="a" style="left:1441px;top:607px;width:18px;height:144px;border-radius:9px;background:linear-gradient(90deg,#404040,#909090 40%,#D0D0D0 60%,#606060);border:1px solid #505050"></div><div class="a" style="left:1442px;top:608px;width:16px;height:20px;border-radius:8px 8px 0 0;background:linear-gradient(90deg,#6070B0,#D8E0F8 50%,#8090C8)"><svg class="a" style="left:3px;top:5px" width="10" height="8"><path d="M5,0 L10,8 H0 Z" fill="#000"/></svg></div><div class="a" style="left:1442px;top:628px;width:16px;height:15px;border-radius:0 0 8px 8px;background:radial-gradient(circle at 50% 50%,#E0E8F8,#8090C8 70%)"></div><div class="a" style="left:1442px;top:730px;width:16px;height:20px;border-radius:0 0 8px 8px;background:linear-gradient(90deg,#6070B0,#D8E0F8 50%,#8090C8)"><svg class="a" style="left:3px;top:6px" width="10" height="8"><path d="M0,0 H10 L5,8 Z" fill="#000"/></svg></div><svg class="a" style="left:1470px;top:686px" width="68" height="64"><path d="M12,3 H52 Q66,3 64,20 Q58,48 16,60 Q3,62 3,50 V14 Q3,3 12,3 Z" fill="#404040"/><path d="M13,6 H51 Q62,6 60,20 Q55,45 17,57 Q6,58 6,48 V15 Q6,6 13,6 Z" fill="url(#okg)" stroke="#E8ECF8" stroke-width="1.5"/><defs><linearGradient id="okg" x1="0" y1="0" x2="1" y2="1"><stop offset="0" stop-color="#D8DCF4"/><stop offset="0.5" stop-color="#B8C0E4"/><stop offset="1" stop-color="#8890C0"/></linearGradient></defs><text x="20" y="35" font-family="Liberation Sans" font-size="13" fill="#101010">OK</text></svg><div class="a raised" style="left:860px;top:801px;width:262px;height:123px;background:#D4D0C8"></div><div class="a" style="left:864px;top:803px;width:255px;height:19px;background:linear-gradient(90deg,#808080,#C0C0C0)"></div><div class="a sunk" style="left:780px;top:840px;width:313px;height:20px;background:#fff;font-size:12px;line-height:17px;padding-left:3px;white-space:nowrap">Yahoo! Digital Camera (USB)</div><div class="btn" style="left:1076px;top:842px;width:16px;height:16px"><svg class="a" style="left:4px;top:6px" width="7" height="4"><path d="M0,0 H7 L3.5,4 Z" fill="#000"/></svg></div><div class="btn" style="left:862px;top:879px;width:71px;height:23px;text-align:right;padding-right:12px;font-size:12px;line-height:21px;white-space:nowrap">ライブ(<u>L</u>)</div><div class="btn" style="left:944px;top:879px;width:70px;height:23px;text-align:center;font-size:12px;line-height:21px;white-space:nowrap;letter-spacing:-0.5px">キャプチャ(<u>C</u>)</div><div class="btn" style="left:1023px;top:879px;width:70px;height:23px;text-align:center;font-size:12px;line-height:21px;white-space:nowrap">終了(<u>D</u>)</div><div class="a raised" style="left:11px;top:12px;width:862px;height:998px;background:#D4D0C8"></div><div class="a" style="left:15px;top:16px;width:854px;height:18px;background:linear-gradient(90deg,#0A246A,#A6CAF0)"></div><svg class="a" style="left:17px;top:17px" width="16" height="16"><rect x="0" y="0" width="16" height="16" fill="#404040"/><rect x="1" y="1" width="14" height="7" fill="#fff"/><path d="M2,5 L6,3 L10,5 L14,3" stroke="#C040C0" fill="none"/><path d="M2,6 L14,6" stroke="#40A040"/><rect x="1" y="9" width="14" height="6" fill="#fff"/><rect x="2" y="10" width="3" height="4" fill="#E00000"/><rect x="6" y="10" width="3" height="4" fill="#0000E0"/><rect x="10" y="10" width="4" height="4" fill="#00C000"/></svg><div class="a" style="left:35px;top:17px;height:16px;line-height:16px;color:#fff;font-weight:bold;font-size:12px;white-space:nowrap">ソフトサーモ計測－計測1 － [折れ線グラフ 1]</div><div class="cap" style="left:818px;top:18px"><div class="a" style="left:4px;top:8px;width:6px;height:2px;background:#000"></div></div><div class="cap" style="left:834px;top:18px"><div class="a" style="left:3px;top:2px;width:9px;height:8px;border:1px solid #000;border-top-width:2px"></div></div><div class="cap" style="left:852px;top:18px"><svg class="a" style="left:3px;top:2px" width="9" height="8"><path d="M0.5,0.5 L8.5,7.5 M8.5,0.5 L0.5,7.5" stroke="#000" stroke-width="1.6"/></svg></div><svg class="a" style="left:19px;top:36px" width="16" height="16"><rect x="0" y="0" width="16" height="16" fill="#404040"/><rect x="1" y="1" width="14" height="7" fill="#fff"/><path d="M2,5 L6,3 L10,5 L14,3" stroke="#C040C0" fill="none"/><path d="M2,6 L14,6" stroke="#40A040"/><rect x="1" y="9" width="14" height="6" fill="#fff"/><rect x="2" y="10" width="3" height="4" fill="#E00000"/><rect x="6" y="10" width="3" height="4" fill="#0000E0"/><rect x="10" y="10" width="4" height="4" fill="#00C000"/></svg><div class="a" style="left:40px;top:36px;height:14px;line-height:14px;font-size:11px;color:#808080;text-shadow:1px 1px #fff;white-space:nowrap;letter-spacing:-0.5px">ﾌｧｲﾙ(<u>F</u>)</div><div class="a" style="left:98px;top:36px;height:14px;line-height:14px;font-size:11px;color:#000;white-space:nowrap;letter-spacing:-0.5px">表示(<u>D</u>)</div><div class="a" style="left:152px;top:36px;height:14px;line-height:14px;font-size:11px;color:#000;white-space:nowrap;letter-spacing:-0.5px">設定(<u>Z</u>)</div><div class="a" style="left:205px;top:36px;height:14px;line-height:14px;font-size:11px;color:#000;white-space:nowrap;letter-spacing:-0.5px">測定(<u>S</u>)</div><div class="a" style="left:257px;top:36px;height:14px;line-height:14px;font-size:11px;color:#000;white-space:nowrap;letter-spacing:-0.5px">ｳｨﾝﾄﾞｳ(<u>W</u>)</div><div class="a" style="left:325px;top:36px;height:14px;line-height:14px;font-size:11px;color:#000;white-space:nowrap;letter-spacing:-0.5px">ﾍﾙﾌﾟ(<u>H</u>)</div><div class="cap" style="left:818px;top:36px"><div class="a" style="left:4px;top:8px;width:6px;height:2px;background:#000"></div></div><div class="cap" style="left:834px;top:36px"><div class="a" style="left:5px;top:1px;width:6px;height:5px;border:1px solid #000;border-top-width:2px"></div><div class="a" style="left:2px;top:4px;width:6px;height:6px;border:1px solid #000;border-top-width:2px;background:#D4D0C8"></div></div><div class="cap" style="left:852px;top:36px"><svg class="a" style="left:3px;top:2px" width="9" height="8"><path d="M0.5,0.5 L8.5,7.5 M8.5,0.5 L0.5,7.5" stroke="#000" stroke-width="1.6"/></svg></div><div class="a" style="left:15px;top:54px;width:855px;height:33px;border:1px solid;border-color:#fff #808080 #808080 #fff"></div><div class="a" style="left:23px;top:58px;width:25px;height:25px;border:1px solid;border-color:#808080 #fff #fff #808080;box-shadow:inset 1px 1px #404040;background:repeating-conic-gradient(#fff 0 25%,#D4D0C8 0 50%) 0 0/2px 2px"><div class="a" style="left:1px;top:0;width:23px;height:23px;line-height:24px;text-align:center;font-size:12px">D1</div></div><div class="tb" style="left:48px"><div class="a" style="left:0px;top:0;width:23px;height:23px;line-height:24px;text-align:center;font-size:12px">D2</div></div><div class="tb" style="left:73px"><div class="a" style="left:0px;top:0;width:23px;height:23px;line-height:24px;text-align:center;font-size:12px">D3</div></div><div class="tb" style="left:105px"><div class="a" style="left:0px;top:0;width:23px;height:23px;line-height:24px;text-align:center;font-size:12px">Y1</div></div><div class="tb" style="left:130px"><div class="a" style="left:0px;top:0;width:23px;height:23px;line-height:24px;text-align:center;font-size:12px">Y2</div></div><div class="tb" style="left:155px"><div class="a" style="left:0px;top:0;width:23px;height:23px;line-height:24px;text-align:center;font-size:12px">Y3</div></div><div class="tb" style="left:187px"><svg width="21" height="21"><path d="M10,1 L19,10 L13,10 L13,20 L7,20 L7,10 L1,10 Z" fill="#000"/></svg></div><div class="tb" style="left:212px"><svg width="21" height="21"><path d="M10,20 L19,11 L13,11 L13,1 L7,1 L7,11 L1,11 Z" fill="#000"/></svg></div><div class="tb" style="left:237px"><svg width="21" height="21"><path d="M10,1 L19,9 L1,9 Z M1,11 L19,11 L10,19 Z" fill="#000"/></svg></div><div class="tb" style="left:262px"><svg width="21" height="21"><path d="M1,1 L19,1 L10,10 Z M10,10 L19,19 L1,19 Z" fill="#000"/></svg></div><div class="tb" style="left:294px"><svg width="21" height="21"><path d="M9,1 L9,19 L1,10 Z M19,1 L19,19 L10,10 Z" fill="#000"/></svg></div><div class="tb" style="left:319px"><svg width="21" height="21"><path d="M10,1 L10,7 L20,7 L20,13 L10,13 L10,19 L1,10 Z" fill="#000"/></svg></div><div class="tb" style="left:344px"><svg width="21" height="21"><path d="M5,5 L16,5 L16,16 L5,16 Z" fill="#000"/></svg></div><div class="tb" style="left:369px"><svg width="21" height="21"><path d="M10,1 L10,7 L0,7 L0,13 L10,13 L10,19 L19,10 Z" fill="#000"/></svg></div><div class="tb" style="left:394px"><svg width="21" height="21"><path d="M1,1 L10,10 L1,19 Z M10,1 L19,10 L10,19 Z" fill="#000"/></svg></div><div class="tb" style="left:419px"><svg width="21" height="21"><path d="M9,1 L9,19 L1,10 Z M11,1 L19,10 L11,19 Z" fill="#000"/></svg></div><div class="tb" style="left:444px"><svg width="21" height="21"><path d="M1,1 L9,10 L1,19 Z M19,1 L19,19 L11,10 Z" fill="#000"/></svg></div><div class="tb" style="left:479px"><svg width="21" height="21"><path d="M3,3 L3,17 L18,17" stroke="#000" fill="none"/><path d="M4,6 H18 M4,9 H18 M4,12 H18" stroke="#808080"/><path d="M10,3 V17" stroke="#0000C0" stroke-width="1.5"/><path d="M4,15 L10,5 L17,15" stroke="#E00000" fill="none"/><path d="M4,18 V19 M7,18 V19 M10,18 V19 M13,18 V19 M16,18 V19" stroke="#000"/></svg></div><div class="a" style="left:23px;top:95px;width:839px;height:838px;border:1px solid;border-color:#fff #808080 #808080 #fff"></div><div class="a" style="left:31px;top:103px;width:823px;height:770px;background:#fff"></div><svg class="a" style="left:0;top:0" width="870" height="920"><g font-family="Liberation Mono" font-size="13.5" fill="#701010"><text x="78.5" y="118" textLength="13" lengthAdjust="spacingAndGlyphs">Y1</text><text x="86.5" y="130.0" textLength="34" lengthAdjust="spacingAndGlyphs" text-anchor="end">-50.0</text><path d="M87,125.5 H95" stroke="#701010"/><text x="86.5" y="197.8" textLength="34" lengthAdjust="spacingAndGlyphs" text-anchor="end">-55.0</text><path d="M87,193.5 H95" stroke="#701010"/><text x="86.5" y="265.6" textLength="34" lengthAdjust="spacingAndGlyphs" text-anchor="end">-60.0</text><path d="M87,261.5 H95" stroke="#701010"/><text x="86.5" y="333.4" textLength="34" lengthAdjust="spacingAndGlyphs" text-anchor="end">-65.0</text><path d="M87,328.5 H95" stroke="#701010"/><text x="86.5" y="401.2" textLength="34" lengthAdjust="spacingAndGlyphs" text-anchor="end">-70.0</text><path d="M87,396.5 H95" stroke="#701010"/><text x="86.5" y="469.0" textLength="34" lengthAdjust="spacingAndGlyphs" text-anchor="end">-75.0</text><path d="M87,464.5 H95" stroke="#701010"/><text x="86.5" y="536.8" textLength="34" lengthAdjust="spacingAndGlyphs" text-anchor="end">-80.0</text><path d="M87,532.5 H95" stroke="#701010"/><text x="86.5" y="604.6" textLength="34" lengthAdjust="spacingAndGlyphs" text-anchor="end">-85.0</text><path d="M87,600.5 H95" stroke="#701010"/><text x="86.5" y="672.4" textLength="34" lengthAdjust="spacingAndGlyphs" text-anchor="end">-90.0</text><path d="M87,667.5 H95" stroke="#701010"/><text x="86.5" y="740.2" textLength="34" lengthAdjust="spacingAndGlyphs" text-anchor="end">-95.0</text><path d="M87,735.5 H95" stroke="#701010"/><text x="86.5" y="808.0" textLength="41" lengthAdjust="spacingAndGlyphs" text-anchor="end">-100.0</text><path d="M87,803.5 H95" stroke="#701010"/></g><path d="M94.5,125 V827" stroke="#701010"/><path d="M95,804.5 H775.5 V826.5 H95" stroke="#000" fill="none"/><g font-family="Liberation Mono" font-size="13.5" fill="#000"><path d="M95.5,827 V834" stroke="#000"/><text x="99.0" y="838" textLength="69" lengthAdjust="spacingAndGlyphs">2026/04/14</text><text x="99.0" y="851" textLength="69" lengthAdjust="spacingAndGlyphs">22:58:40.5</text><path d="M208.5,827 V834" stroke="#000"/><text x="212.2" y="838" textLength="69" lengthAdjust="spacingAndGlyphs">2026/04/15</text><text x="212.2" y="851" textLength="62" lengthAdjust="spacingAndGlyphs">1:07:04.0</text><path d="M321.5,827 V834" stroke="#000"/><text x="325.4" y="838" textLength="69" lengthAdjust="spacingAndGlyphs">2026/04/15</text><text x="325.4" y="851" textLength="62" lengthAdjust="spacingAndGlyphs">3:15:27.5</text><path d="M435.5,827 V834" stroke="#000"/><text x="438.6" y="838" textLength="69" lengthAdjust="spacingAndGlyphs">2026/04/15</text><text x="438.6" y="851" textLength="62" lengthAdjust="spacingAndGlyphs">5:23:51.0</text><path d="M548.5,827 V834" stroke="#000"/><text x="551.8" y="838" textLength="69" lengthAdjust="spacingAndGlyphs">2026/04/15</text><text x="551.8" y="851" textLength="62" lengthAdjust="spacingAndGlyphs">7:32:14.5</text><path d="M661.5,827 V834" stroke="#000"/><text x="665.0" y="838" textLength="69" lengthAdjust="spacingAndGlyphs">2026/04/15</text><text x="665.0" y="851" textLength="62" lengthAdjust="spacingAndGlyphs">9:40:38.0</text><path d="M774.5,827 V834" stroke="#000"/><text x="778.2" y="838" textLength="69" lengthAdjust="spacingAndGlyphs">2026/04/15</text><text x="778.2" y="851" textLength="69" lengthAdjust="spacingAndGlyphs">11:49:01.5</text></g><rect x="31" y="875" width="135" height="39" fill="#fff"/><g font-family="Liberation Mono" font-size="13.5" fill="#800000"><text x="32" y="886" textLength="55" lengthAdjust="spacingAndGlyphs">Comp-low</text><text x="32" y="899" textLength="55" lengthAdjust="spacingAndGlyphs">CH1 [°C]</text><text x="32" y="912" textLength="34" lengthAdjust="spacingAndGlyphs">-----</text></g><rect x="168" y="875" width="135" height="39" fill="#fff"/><g font-family="Liberation Mono" font-size="13.5" fill="#909010"><text x="169" y="886" textLength="62" lengthAdjust="spacingAndGlyphs">Comp-High</text><text x="169" y="899" textLength="55" lengthAdjust="spacingAndGlyphs">CH2 [°C]</text><text x="169" y="912" textLength="34" lengthAdjust="spacingAndGlyphs">-----</text></g><rect x="305" y="875" width="135" height="39" fill="#fff"/><g font-family="Liberation Mono" font-size="13.5" fill="#1E78D8"><text x="306" y="886" textLength="97" lengthAdjust="spacingAndGlyphs">MDF-330-2(-50)</text><text x="306" y="899" textLength="55" lengthAdjust="spacingAndGlyphs">CH3 [°C]</text><text x="306" y="912" textLength="34" lengthAdjust="spacingAndGlyphs">-64.7</text></g><rect x="442" y="875" width="135" height="39" fill="#fff"/><g font-family="Liberation Mono" font-size="13.5" fill="#00C000"><text x="443" y="899" textLength="41" lengthAdjust="spacingAndGlyphs">CH4 []</text><text x="443" y="912" textLength="34" lengthAdjust="spacingAndGlyphs">-----</text></g><rect x="579" y="875" width="135" height="39" fill="#fff"/><g font-family="Liberation Mono" font-size="13.5" fill="#000"><text x="580" y="886" textLength="48" lengthAdjust="spacingAndGlyphs">MDF-190</text><text x="580" y="899" textLength="55" lengthAdjust="spacingAndGlyphs">CH5 [°C]</text><text x="580" y="912" textLength="34" lengthAdjust="spacingAndGlyphs">-62.1</text></g><rect x="716" y="875" width="135" height="39" fill="#fff"/><g font-family="Liberation Mono" font-size="13.5" fill="#C00000"><text x="717" y="886" textLength="55" lengthAdjust="spacingAndGlyphs">2110Temp</text><text x="717" y="899" textLength="55" lengthAdjust="spacingAndGlyphs">CH6 [mV]</text><text x="717" y="912" textLength="34" lengthAdjust="spacingAndGlyphs">-81.1</text></g><polyline points="95.0,550.6 96.0,550.5 97.0,549.9 98.0,550.5 99.0,551.1 100.0,550.9 101.0,551.1 102.0,550.7 103.0,549.0 104.0,550.1 105.0,550.8 106.0,551.3 107.0,549.2 108.0,550.5 109.0,550.9 110.0,550.7 111.0,551.0 112.0,550.7 113.0,551.3 114.0,550.8 115.0,549.5 116.0,550.3 117.0,552.6 118.0,550.3 119.0,551.9 120.0,550.5 121.0,550.8 122.0,551.3 123.0,551.5 124.0,551.3 125.0,551.5 126.0,551.2 127.0,549.7 128.0,553.1 129.0,551.1 130.0,550.4 131.0,550.8 132.0,550.4 133.0,550.9 134.0,551.2 135.0,550.9 136.0,550.1 137.0,550.8 138.0,550.5 139.0,550.4 140.0,550.4 141.0,550.7 142.0,550.9 143.0,550.6 144.0,549.1 145.0,550.2 146.0,551.9 147.0,550.5 148.0,550.7 149.0,550.5 150.0,550.6 151.0,550.1 152.0,550.2 153.0,550.1 154.0,552.1 155.0,550.2 156.0,550.8 157.0,550.5 158.0,550.4 159.0,550.0 160.0,550.3 161.0,550.5 162.0,550.9 163.0,550.8 164.0,551.0 165.0,550.8 166.0,551.1 167.0,552.0 168.0,552.1 169.0,552.6 170.0,552.6 171.0,552.1 172.0,553.5 173.0,552.4 174.0,552.1 175.0,553.0 176.0,551.7 177.0,552.1 178.0,552.0 179.0,552.6 180.0,552.6 181.0,552.4 182.0,552.6 183.0,552.2 184.0,552.4 185.0,552.6 186.0,552.6 187.0,553.0 188.0,552.6 189.0,553.9 190.0,553.0 191.0,552.8 192.0,552.9 193.0,553.5 194.0,553.4 195.0,554.4 196.0,553.1 197.0,552.8 198.0,552.3 199.0,553.1 200.0,553.0 201.0,552.6 202.0,552.9 203.0,552.5 204.0,552.6 205.0,553.3 206.0,553.4 207.0,552.8 208.0,552.6 209.0,552.9 210.0,553.0 211.0,553.0 212.0,553.1 213.0,553.2 214.0,553.5 215.0,554.1 216.0,554.2 217.0,554.2 218.0,553.7 219.0,553.6 220.0,551.9 221.0,550.5 222.0,551.4 223.0,553.3 224.0,553.0 225.0,554.4 226.0,553.1 227.0,554.2 228.0,553.6 229.0,553.4 230.0,554.2 231.0,554.2 232.0,553.8 233.0,554.6 234.0,553.6 235.0,552.5 236.0,554.6 237.0,554.6 238.0,554.3 239.0,553.8 240.0,554.6 241.0,554.7 242.0,555.1 243.0,554.7 244.0,555.1 245.0,554.7 246.0,552.9 247.0,554.9 248.0,554.4 249.0,552.4 250.0,555.3 251.0,553.3 252.0,553.6 253.0,553.7 254.0,551.7 255.0,554.2 256.0,554.1 257.0,554.3 258.0,553.9 259.0,553.6 260.0,553.3 261.0,553.0 262.0,553.1 263.0,552.3 264.0,552.5 265.0,553.0 266.0,553.6 267.0,553.6 268.0,552.9 269.0,552.8 270.0,552.9 271.0,553.5 272.0,553.5 273.0,553.6 274.0,555.2 275.0,552.7 276.0,550.7 277.0,552.5 278.0,552.5 279.0,554.8 280.0,553.1 281.0,553.2 282.0,552.5 283.0,552.3 284.0,552.4 285.0,552.3 286.0,552.1 287.0,551.8 288.0,552.2 289.0,552.7 290.0,553.2 291.0,553.0 292.0,554.5 293.0,552.7 294.0,553.0 295.0,552.9 296.0,552.9 297.0,552.7 298.0,552.4 299.0,552.4 300.0,552.8 301.0,552.2 302.0,554.9 303.0,553.5 304.0,553.2 305.0,553.6 306.0,552.8 307.0,552.9 308.0,554.1 309.0,552.8 310.0,553.2 311.0,553.1 312.0,553.3 313.0,553.6 314.0,553.3 315.0,553.0 316.0,552.9 317.0,552.8 318.0,552.8 319.0,552.1 320.0,552.8 321.0,552.6 322.0,552.7 323.0,552.7 324.0,554.2 325.0,551.6 326.0,552.1 327.0,552.7 328.0,552.3 329.0,552.2 330.0,552.3 331.0,552.5 332.0,552.9 333.0,552.4 334.0,552.4 335.0,552.0 336.0,552.7 337.0,552.5 338.0,552.6 339.0,552.9 340.0,553.0 341.0,553.2 342.0,554.4 343.0,553.2 344.0,553.4 345.0,553.6 346.0,553.7 347.0,554.5 348.0,553.8 349.0,553.3 350.0,553.5 351.0,552.9 352.0,553.1 353.0,553.0 354.0,553.1 355.0,553.2 356.0,553.5 357.0,553.2 358.0,553.0 359.0,555.3 360.0,553.2 361.0,551.5 362.0,552.2 363.0,552.1 364.0,552.2 365.0,551.9 366.0,552.2 367.0,551.7 368.0,551.6 369.0,551.7 370.0,551.8 371.0,552.4 372.0,551.9 373.0,552.3 374.0,552.5 375.0,552.0 376.0,553.0 377.0,553.0 378.0,554.5 379.0,552.6 380.0,553.8 381.0,552.6 382.0,552.7 383.0,552.6 384.0,552.8 385.0,552.5 386.0,553.1 387.0,552.7 388.0,552.9 389.0,552.7 390.0,552.5 391.0,552.5 392.0,551.9 393.0,552.4 394.0,552.4 395.0,552.5 396.0,552.5 397.0,552.3 398.0,552.5 399.0,552.5 400.0,552.4 401.0,552.5 402.0,552.4 403.0,552.4 404.0,552.5 405.0,553.0 406.0,553.4 407.0,553.4 408.0,553.7 409.0,553.9 410.0,553.5 411.0,553.6 412.0,553.3 413.0,553.0 414.0,552.7 415.0,553.4 416.0,554.3 417.0,553.6 418.0,553.8 419.0,554.1 420.0,553.4 421.0,553.6 422.0,553.6 423.0,553.5 424.0,553.9 425.0,553.2 426.0,552.9 427.0,553.2 428.0,552.8 429.0,553.5 430.0,552.9 431.0,553.1 432.0,552.8 433.0,551.1 434.0,552.8 435.0,552.9 436.0,552.9 437.0,553.0 438.0,553.0 439.0,553.1 440.0,553.6 441.0,554.7 442.0,552.8 443.0,553.4 444.0,552.3 445.0,550.6 446.0,552.1 447.0,552.1 448.0,553.2 449.0,554.4 450.0,553.2 451.0,552.9 452.0,552.3 453.0,553.8 454.0,551.2 455.0,550.2 456.0,552.4 457.0,551.9 458.0,552.2 459.0,551.9 460.0,551.6 461.0,551.6 462.0,551.8 463.0,551.9 464.0,552.4 465.0,552.2 466.0,552.2 467.0,551.9 468.0,551.8 469.0,551.5 470.0,551.9 471.0,552.0 472.0,553.2 473.0,551.9 474.0,551.8 475.0,551.9 476.0,552.1 477.0,551.9 478.0,552.1 479.0,552.4 480.0,552.6 481.0,552.5 482.0,552.9 483.0,552.3 484.0,553.5 485.0,551.4 486.0,551.7 487.0,551.8 488.0,551.9 489.0,549.6 490.0,552.0 491.0,551.0 492.0,551.6 493.0,551.8 494.0,550.9 495.0,552.1 496.0,553.0 497.0,553.1 498.0,552.5 499.0,552.7 500.0,550.4 501.0,552.4 502.0,553.1 503.0,553.2 504.0,552.9 505.0,553.3 506.0,553.3 507.0,553.2 508.0,553.8 509.0,552.8 510.0,552.6 511.0,554.8 512.0,552.9 513.0,552.9 514.0,555.4 515.0,554.2 516.0,554.4 517.0,554.4 518.0,553.7 519.0,553.5 520.0,553.5 521.0,553.3 522.0,553.1 523.0,553.3 524.0,553.5 525.0,553.7 526.0,553.8 527.0,553.6 528.0,553.8 529.0,553.7 530.0,553.4 531.0,553.8 532.0,554.2 533.0,553.8 534.0,554.0 535.0,553.7 536.0,554.2 537.0,554.0 538.0,554.7 539.0,554.3 540.0,553.9 541.0,553.9 542.0,554.8 543.0,553.1 544.0,553.0 545.0,554.8 546.0,553.7 547.0,553.7 548.0,554.0 549.0,554.1 550.0,552.5 551.0,553.3 552.0,553.6 553.0,553.1 554.0,552.2 555.0,553.4 556.0,553.6 557.0,552.8 558.0,552.3 559.0,552.0 560.0,552.7 561.0,553.0 562.0,553.0 563.0,552.8 564.0,552.6 565.0,552.6 566.0,552.8 567.0,553.0 568.0,553.0 569.0,552.9 570.0,552.6 571.0,552.6 572.0,554.6 573.0,552.5 574.0,552.5 575.0,552.3 576.0,552.3 577.0,552.1 578.0,552.2 579.0,552.6 580.0,552.7 581.0,550.8 582.0,552.8 583.0,552.7 584.0,552.7 585.0,552.3 586.0,552.2 587.0,551.4 588.0,549.7 589.0,551.3 590.0,551.3 591.0,551.3 592.0,551.9 593.0,552.2 594.0,551.8 595.0,551.5 596.0,551.7 597.0,551.5 598.0,551.2 599.0,551.7 600.0,551.6 601.0,551.7 602.0,551.5 603.0,552.7 604.0,551.1 605.0,551.0 606.0,551.2 607.0,551.3 608.0,551.5 609.0,552.7 610.0,550.5 611.0,552.3 612.0,552.4 613.0,550.1 614.0,550.6 615.0,550.3 616.0,550.1 617.0,548.4 618.0,549.8 619.0,550.3 620.0,549.5 621.0,552.3 622.0,550.4 623.0,550.2 624.0,550.5 625.0,550.3 626.0,548.5 627.0,548.9 628.0,551.7 629.0,549.7 630.0,547.3 631.0,549.1 632.0,549.0 633.0,549.4 634.0,547.6 635.0,549.3 636.0,549.9 637.0,549.4 638.0,548.6 639.0,549.5 640.0,549.7 641.0,549.6 642.0,549.9 643.0,549.9 644.0,550.3 645.0,550.2 646.0,549.5 647.0,549.9 648.0,547.5 649.0,548.9 650.0,549.5 651.0,549.1 652.0,549.0 653.0,550.3 654.0,548.8 655.0,548.9 656.0,550.0 657.0,548.7 658.0,548.5 659.0,549.5 660.0,549.4 661.0,551.0 662.0,550.0 663.0,550.1 664.0,549.8 665.0,549.3 666.0,549.3 667.0,549.2 668.0,549.5 669.0,549.8 670.0,549.2 671.0,549.3 672.0,549.4 673.0,549.3 674.0,549.4 675.0,548.8 676.0,549.5 677.0,548.5 678.0,548.6 679.0,549.0 680.0,549.4 681.0,549.2 682.0,549.6 683.0,549.9 684.0,549.1 685.0,549.1 686.0,548.7 687.0,550.6 688.0,548.6 689.0,548.2 690.0,548.5 691.0,548.5 692.0,548.5 693.0,549.0 694.0,549.2 695.0,547.9 696.0,548.8 697.0,548.8 698.0,549.0 699.0,549.2 700.0,549.4 701.0,551.0 702.0,551.3 703.0,553.1 704.0,552.4 705.0,553.3 706.0,552.8 707.0,552.6 708.0,552.2 709.0,552.7 710.0,552.6 711.0,552.1 712.0,551.9 713.0,551.7 714.0,551.6 715.0,551.5 716.0,549.9 717.0,549.7 718.0,549.8 719.0,549.8 720.0,549.4 721.0,549.8 722.0,549.7 723.0,549.1 724.0,548.8 725.0,549.3 726.0,549.5 727.0,549.3 728.0,549.5 729.0,548.9 730.0,551.1 731.0,549.2 732.0,549.7 733.0,549.7 734.0,549.5 735.0,548.8 736.0,549.1 737.0,549.0 738.0,548.9 739.0,549.1 740.0,549.0 741.0,548.8 742.0,549.5 743.0,549.3 744.0,549.2 745.0,549.3 746.0,549.6 747.0,549.0 748.0,549.7 749.0,550.0 750.0,550.2 751.0,550.0 752.0,549.4 753.0,549.3 754.0,549.9 755.0,549.3 756.0,547.1 757.0,549.9 758.0,549.5 759.0,549.7 760.0,550.0 761.0,550.1 762.0,550.2 763.0,550.2 764.0,549.7 765.0,547.5 766.0,550.1 767.0,550.0 768.0,549.9 769.0,549.0 770.0,548.9 771.0,548.9 772.0,551.3 773.0,549.5" fill="none" stroke="#E00000" stroke-width="1.3"/><polyline points="95.0,321.7 95.5,323.2 96.0,323.5 96.5,324.6 97.0,325.4 97.5,326.5 98.0,326.4 98.5,326.0 99.0,328.6 99.5,329.0 100.0,329.7 100.5,330.8 101.0,332.0 101.5,332.4 102.0,332.7 102.5,333.1 103.0,333.9 103.5,335.2 104.0,336.5 104.5,336.8 105.0,338.8 105.5,340.0 106.0,341.0 106.5,340.8 107.0,342.9 107.5,343.9 108.0,345.0 108.5,346.7 109.0,347.8 109.5,349.5 110.0,351.6 110.5,351.6 111.0,353.4 111.5,353.3 112.0,354.0 112.5,355.1 113.0,357.1 113.5,358.0 114.0,359.1 114.5,359.3 115.0,360.0 115.5,360.4 116.0,362.0 116.5,363.1 117.0,365.5 117.5,365.2 118.0,366.2 118.5,366.2 119.0,366.6 119.5,367.5 120.0,368.2 120.5,368.3 121.0,369.2 121.5,370.7 122.0,370.5 122.5,371.5 123.0,373.4 123.5,373.5 124.0,374.9 124.5,374.0 125.0,374.3 125.5,373.6 126.0,372.9 126.5,371.9 127.0,371.4 127.5,370.6 128.0,369.0 128.5,368.0 129.0,367.0 129.5,366.4 130.0,365.5 130.5,364.0 131.0,363.8 131.5,363.2 132.0,362.6 132.5,361.6 133.0,361.7 133.5,361.1 134.0,360.2 134.5,359.8 135.0,358.6 135.5,357.9 136.0,356.7 136.5,356.2 137.0,355.0 137.5,353.6 138.0,352.4 138.5,351.5 139.0,351.0 139.5,350.1 140.0,349.0 140.5,347.8 141.0,346.5 141.5,345.4 142.0,343.9 142.5,342.5 143.0,342.3 143.5,339.8 144.0,339.0 144.5,337.7 145.0,336.3 145.5,335.2 146.0,334.8 146.5,334.0 147.0,333.0 147.5,332.3 148.0,332.4 148.5,331.3 149.0,330.8 149.5,329.9 150.0,328.6 150.5,326.8 151.0,326.4 151.5,326.6 152.0,325.9 152.5,325.7 153.0,324.3 153.5,322.6 154.0,322.2 154.5,321.3 155.0,320.2 155.5,320.8 156.0,319.6 156.5,319.4 157.0,319.5 157.5,320.2 158.0,321.4 158.5,321.8 159.0,323.0 159.5,323.1 160.0,323.6 160.5,324.9 161.0,327.0 161.5,327.5 162.0,327.9 162.5,329.1 163.0,330.0 163.5,331.1 164.0,333.0 164.5,334.5 165.0,335.8 165.5,337.2 166.0,339.2 166.5,340.8 167.0,341.7 167.5,343.0 168.0,344.1 168.5,346.0 169.0,346.8 169.5,348.5 170.0,349.7 170.5,350.8 171.0,352.0 171.5,353.7 172.0,355.5 172.5,355.8 173.0,357.3 173.5,359.0 174.0,360.2 174.5,361.4 175.0,362.2 175.5,363.3 176.0,364.6 176.5,366.3 177.0,367.2 177.5,367.7 178.0,368.4 178.5,369.2 179.0,370.2 179.5,371.4 180.0,372.4 180.5,373.3 181.0,372.9 181.5,372.9 182.0,372.5 182.5,372.5 183.0,371.6 183.5,370.1 184.0,369.2 184.5,368.9 185.0,367.8 185.5,366.5 186.0,366.0 186.5,364.5 187.0,365.1 187.5,363.8 188.0,364.0 188.5,363.3 189.0,361.5 189.5,360.8 190.0,361.0 190.5,360.0 191.0,357.4 191.5,357.1 192.0,356.4 192.5,354.7 193.0,353.9 193.5,352.3 194.0,350.8 194.5,350.8 195.0,349.6 195.5,349.5 196.0,348.2 196.5,347.1 197.0,346.2 197.5,345.5 198.0,344.6 198.5,344.3 199.0,343.0 199.5,342.4 200.0,342.5 200.5,341.1 201.0,338.9 201.5,338.3 202.0,337.0 202.5,336.0 203.0,334.9 203.5,334.1 204.0,333.3 204.5,333.7 205.0,332.2 205.5,331.2 206.0,330.6 206.5,330.1 207.0,328.5 207.5,328.3 208.0,327.2 208.5,325.5 209.0,324.2 209.5,324.4 210.0,323.7 210.5,323.2 211.0,322.1 211.5,321.8 212.0,320.9 212.5,320.8 213.0,319.8 213.5,321.3 214.0,322.3 214.5,322.9 215.0,324.2 215.5,324.3 216.0,325.4 216.5,326.1 217.0,326.1 217.5,327.0 218.0,327.9 218.5,329.2 219.0,331.3 219.5,333.3 220.0,333.9 220.5,335.4 221.0,335.8 221.5,336.7 222.0,337.9 222.5,339.4 223.0,339.7 223.5,340.2 224.0,341.3 224.5,343.1 225.0,344.2 225.5,345.9 226.0,347.3 226.5,348.5 227.0,350.2 227.5,351.1 228.0,352.1 228.5,353.0 229.0,354.6 229.5,357.0 230.0,358.1 230.5,358.8 231.0,359.7 231.5,360.7 232.0,361.1 232.5,361.6 233.0,362.9 233.5,363.9 234.0,364.7 234.5,366.5 235.0,366.4 235.5,368.0 236.0,369.1 236.5,370.2 237.0,371.6 237.5,371.8 238.0,372.3 238.5,373.9 239.0,374.5 239.5,374.1 240.0,373.9 240.5,372.9 241.0,372.0 241.5,370.6 242.0,369.6 242.5,368.7 243.0,368.1 243.5,367.9 244.0,366.8 244.5,365.9 245.0,365.4 245.5,363.9 246.0,364.1 246.5,362.7 247.0,363.2 247.5,362.0 248.0,360.2 248.5,359.1 249.0,358.2 249.5,357.4 250.0,357.2 250.5,357.3 251.0,356.3 251.5,354.5 252.0,352.6 252.5,351.0 253.0,350.4 253.5,349.2 254.0,348.9 254.5,347.3 255.0,346.2 255.5,345.9 256.0,344.6 256.5,342.4 257.0,340.9 257.5,339.9 258.0,339.0 258.5,338.1 259.0,336.7 259.5,336.3 260.0,335.2 260.5,335.1 261.0,333.4 261.5,331.8 262.0,331.1 262.5,331.4 263.0,329.4 263.5,328.5 264.0,327.5 264.5,327.3 265.0,326.6 265.5,325.1 266.0,324.2 266.5,324.0 267.0,323.2 267.5,322.3 268.0,321.7 268.5,321.7 269.0,320.9 269.5,320.4 270.0,320.0 270.5,320.8 271.0,322.2 271.5,323.1 272.0,324.1 272.5,324.0 273.0,324.8 273.5,325.3 274.0,326.8 274.5,328.1 275.0,328.4 275.5,330.2 276.0,330.7 276.5,332.3 277.0,333.8 277.5,335.8 278.0,336.6 278.5,338.3 279.0,339.6 279.5,341.1 280.0,342.4 280.5,343.1 281.0,344.2 281.5,345.7 282.0,347.8 282.5,348.9 283.0,350.0 283.5,351.2 284.0,353.7 284.5,355.9 285.0,356.3 285.5,357.6 286.0,358.8 286.5,360.9 287.0,361.5 287.5,362.5 288.0,364.4 288.5,364.9 289.0,366.6 289.5,367.2 290.0,367.9 290.5,368.3 291.0,368.6 291.5,370.2 292.0,370.3 292.5,371.8 293.0,373.2 293.5,372.0 294.0,371.2 294.5,370.2 295.0,370.2 295.5,369.3 296.0,369.7 296.5,368.6 297.0,369.0 297.5,367.9 298.0,367.0 298.5,365.3 299.0,364.8 299.5,364.6 300.0,362.9 300.5,362.3 301.0,360.7 301.5,360.2 302.0,359.4 302.5,358.2 303.0,358.1 303.5,357.1 304.0,355.5 304.5,354.1 305.0,353.2 305.5,352.6 306.0,351.1 306.5,351.0 307.0,349.5 307.5,348.4 308.0,347.5 308.5,347.0 309.0,346.6 309.5,346.2 310.0,345.0 310.5,343.6 311.0,342.4 311.5,341.1 312.0,340.0 312.5,339.3 313.0,337.8 313.5,337.3 314.0,336.1 314.5,334.7 315.0,333.9 315.5,333.1 316.0,332.3 316.5,332.0 317.0,331.2 317.5,330.3 318.0,329.7 318.5,329.3 319.0,327.2 319.5,326.4 320.0,324.9 320.5,324.2 321.0,323.1 321.5,322.8 322.0,321.7 322.5,321.2 323.0,321.3 323.5,318.9 324.0,317.9 324.5,319.6 325.0,319.6 325.5,320.8 326.0,322.5 326.5,322.9 327.0,324.5 327.5,326.1 328.0,327.1 328.5,327.4 329.0,328.4 329.5,330.1 330.0,330.7 330.5,331.3 331.0,332.7 331.5,334.2 332.0,335.3 332.5,336.1 333.0,337.4 333.5,338.1 334.0,339.2 334.5,341.0 335.0,342.2 335.5,344.1 336.0,345.8 336.5,346.6 337.0,348.4 337.5,349.4 338.0,350.5 338.5,351.6 339.0,353.4 339.5,355.2 340.0,355.9 340.5,357.8 341.0,359.4 341.5,360.4 342.0,360.3 342.5,361.4 343.0,361.9 343.5,364.3 344.0,365.1 344.5,365.3 345.0,366.1 345.5,368.0 346.0,369.1 346.5,370.6 347.0,371.5 347.5,372.0 348.0,373.1 348.5,374.2 349.0,374.2 349.5,374.0 350.0,371.6 350.5,371.8 351.0,370.8 351.5,371.2 352.0,370.4 352.5,370.2 353.0,368.9 353.5,368.1 354.0,367.8 354.5,367.4 355.0,367.3 355.5,364.6 356.0,363.6 356.5,363.1 357.0,362.7 357.5,361.9 358.0,360.6 358.5,360.0 359.0,359.6 359.5,358.4 360.0,356.6 360.5,356.1 361.0,354.5 361.5,353.8 362.0,351.9 362.5,350.5 363.0,348.9 363.5,349.2 364.0,347.6 364.5,347.3 365.0,346.3 365.5,345.9 366.0,345.3 366.5,344.1 367.0,342.4 367.5,341.6 368.0,342.2 368.5,340.9 369.0,339.6 369.5,338.5 370.0,337.4 370.5,336.7 371.0,336.0 371.5,334.9 372.0,334.0 372.5,333.5 373.0,333.0 373.5,332.2 374.0,332.3 374.5,330.3 375.0,330.5 375.5,329.4 376.0,328.3 376.5,327.1 377.0,325.9 377.5,325.0 378.0,323.5 378.5,323.4 379.0,323.3 379.5,322.3 380.0,322.5 380.5,322.4 381.0,322.1 381.5,321.9 382.0,322.3 382.5,322.3 383.0,322.7 383.5,322.6 384.0,324.7 384.5,325.2 385.0,325.7 385.5,327.1 386.0,328.3 386.5,329.1 387.0,329.7 387.5,330.8 388.0,331.9 388.5,333.3 389.0,334.8 389.5,334.9 390.0,336.3 390.5,338.5 391.0,340.4 391.5,341.8 392.0,343.7 392.5,344.6 393.0,346.1 393.5,346.6 394.0,348.9 394.5,350.0 395.0,351.4 395.5,352.5 396.0,354.5 396.5,355.9 397.0,356.6 397.5,357.6 398.0,358.6 398.5,359.8 399.0,360.7 399.5,361.1 400.0,364.0 400.5,365.2 401.0,365.4 401.5,366.6 402.0,368.0 402.5,368.3 403.0,369.5 403.5,371.1 404.0,372.1 404.5,373.6 405.0,374.4 405.5,374.9 406.0,373.7 406.5,372.4 407.0,372.6 407.5,371.9 408.0,371.2 408.5,369.9 409.0,370.9 409.5,370.8 410.0,369.7 410.5,369.1 411.0,367.6 411.5,366.8 412.0,364.7 412.5,363.9 413.0,363.6 413.5,362.6 414.0,361.4 414.5,361.0 415.0,359.0 415.5,358.6 416.0,357.7 416.5,356.6 417.0,355.5 417.5,354.6 418.0,354.2 418.5,353.5 419.0,352.5 419.5,351.4 420.0,349.6 420.5,348.0 421.0,346.6 421.5,345.9 422.0,345.7 422.5,344.6 423.0,343.7 423.5,342.2 424.0,342.0 424.5,340.4 425.0,339.3 425.5,337.6 426.0,336.7 426.5,336.6 427.0,335.6 427.5,335.0 428.0,334.9 428.5,333.9 429.0,333.6 429.5,332.5 430.0,332.1 430.5,331.8 431.0,331.0 431.5,329.4 432.0,327.9 432.5,326.8 433.0,326.0 433.5,325.9 434.0,324.9 434.5,324.2 435.0,324.3 435.5,323.5 436.0,322.6 436.5,322.2 437.0,322.1 437.5,320.7 438.0,321.0 438.5,321.8 439.0,323.3 439.5,323.4 440.0,323.9 440.5,325.7 441.0,327.3 441.5,327.5 442.0,328.1 442.5,328.8 443.0,330.3 443.5,332.3 444.0,333.5 444.5,335.6 445.0,336.0 445.5,337.5 446.0,339.2 446.5,339.4 447.0,340.9 447.5,342.2 448.0,344.3 448.5,345.5 449.0,347.5 449.5,348.7 450.0,349.0 450.5,349.5 451.0,350.2 451.5,351.2 452.0,351.9 452.5,354.5 453.0,356.6 453.5,357.7 454.0,358.6 454.5,360.4 455.0,361.1 455.5,362.8 456.0,364.7 456.5,365.1 457.0,366.8 457.5,366.8 458.0,368.9 458.5,370.2 459.0,371.5 459.5,371.9 460.0,372.9 460.5,372.4 461.0,373.5 461.5,373.1 462.0,372.3 462.5,371.3 463.0,370.2 463.5,370.3 464.0,370.0 464.5,369.3 465.0,368.2 465.5,367.2 466.0,366.6 466.5,365.4 467.0,363.6 467.5,363.5 468.0,362.5 468.5,361.5 469.0,360.3 469.5,358.9 470.0,358.8 470.5,358.0 471.0,357.3 471.5,355.8 472.0,354.9 472.5,353.6 473.0,353.0 473.5,351.7 474.0,351.0 474.5,349.0 475.0,348.7 475.5,346.6 476.0,346.1 476.5,345.6 477.0,345.0 477.5,343.4 478.0,342.4 478.5,341.3 479.0,340.5 479.5,340.4 480.0,338.9 480.5,338.5 481.0,337.5 481.5,335.9 482.0,335.0 482.5,334.7 483.0,333.2 483.5,332.8 484.0,331.2 484.5,330.3 485.0,329.1 485.5,328.8 486.0,328.3 486.5,325.7 487.0,324.8 487.5,324.8 488.0,323.8 488.5,322.9 489.0,322.1 489.5,321.5 490.0,321.2 490.5,320.2 491.0,319.3 491.5,317.9 492.0,318.5 492.5,319.2 493.0,319.9 493.5,320.9 494.0,321.9 494.5,322.8 495.0,323.7 495.5,325.1 496.0,325.1 496.5,325.8 497.0,326.7 497.5,327.6 498.0,329.1 498.5,330.6 499.0,331.5 499.5,333.4 500.0,334.4 500.5,335.1 501.0,336.2 501.5,335.9 502.0,336.9 502.5,338.3 503.0,340.3 503.5,342.5 504.0,343.1 504.5,344.9 505.0,345.0 505.5,346.7 506.0,348.6 506.5,349.5 507.0,351.3 507.5,352.6 508.0,352.2 508.5,353.5 509.0,355.1 509.5,356.1 510.0,357.6 510.5,359.4 511.0,360.7 511.5,363.1 512.0,363.1 512.5,364.2 513.0,364.7 513.5,366.1 514.0,366.5 514.5,367.1 515.0,368.2 515.5,369.6 516.0,371.1 516.5,372.3 517.0,372.4 517.5,373.1 518.0,374.3 518.5,374.3 519.0,374.1 519.5,374.2 520.0,373.6 520.5,373.7 521.0,373.2 521.5,372.4 522.0,371.9 522.5,370.0 523.0,369.9 523.5,368.7 524.0,368.0 524.5,367.5 525.0,366.8 525.5,365.5 526.0,364.3 526.5,364.0 527.0,363.3 527.5,360.7 528.0,359.9 528.5,359.6 529.0,357.8 529.5,357.2 530.0,355.8 530.5,355.2 531.0,355.8 531.5,355.2 532.0,353.2 532.5,352.2 533.0,351.2 533.5,349.2 534.0,348.3 534.5,347.1 535.0,346.9 535.5,345.8 536.0,344.9 536.5,343.4 537.0,342.1 537.5,340.4 538.0,339.9 538.5,339.2 539.0,337.9 539.5,337.5 540.0,335.8 540.5,334.2 541.0,332.7 541.5,332.8 542.0,331.7 542.5,330.4 543.0,329.2 543.5,328.7 544.0,327.3 544.5,327.0 545.0,326.5 545.5,325.4 546.0,323.5 546.5,323.7 547.0,322.0 547.5,322.0 548.0,321.2 548.5,320.6 549.0,320.4 549.5,320.5 550.0,321.2 550.5,322.3 551.0,323.4 551.5,324.3 552.0,325.4 552.5,326.4 553.0,326.7 553.5,328.0 554.0,329.7 554.5,330.2 555.0,331.4 555.5,331.9 556.0,333.2 556.5,334.4 557.0,336.0 557.5,336.4 558.0,337.2 558.5,338.6 559.0,339.8 559.5,340.8 560.0,343.0 560.5,344.6 561.0,346.4 561.5,347.0 562.0,348.2 562.5,349.0 563.0,350.0 563.5,351.2 564.0,353.0 564.5,354.1 565.0,355.5 565.5,356.5 566.0,357.7 566.5,359.2 567.0,360.6 567.5,362.0 568.0,363.3 568.5,364.7 569.0,364.7 569.5,365.6 570.0,365.4 570.5,365.8 571.0,366.6 571.5,368.1 572.0,368.7 572.5,370.4 573.0,370.6 573.5,372.6 574.0,372.3 574.5,373.4 575.0,374.0 575.5,373.8 576.0,373.6 576.5,372.2 577.0,371.4 577.5,370.7 578.0,370.0 578.5,369.2 579.0,369.1 579.5,367.8 580.0,367.2 580.5,366.8 581.0,365.7 581.5,364.4 582.0,364.3 582.5,362.8 583.0,361.2 583.5,360.7 584.0,360.3 584.5,358.9 585.0,357.5 585.5,356.9 586.0,356.0 586.5,354.3 587.0,353.6 587.5,352.1 588.0,350.9 588.5,349.5 589.0,348.6 589.5,348.2 590.0,347.1 590.5,345.7 591.0,344.2 591.5,342.6 592.0,342.1 592.5,340.5 593.0,340.2 593.5,339.8 594.0,338.3 594.5,336.7 595.0,335.6 595.5,334.5 596.0,334.2 596.5,333.5 597.0,332.4 597.5,332.6 598.0,331.3 598.5,330.4 599.0,329.1 599.5,327.9 600.0,328.0 600.5,326.4 601.0,325.3 601.5,324.6 602.0,323.7 602.5,323.1 603.0,321.3 603.5,319.4 604.0,319.3 604.5,320.0 605.0,318.3 605.5,317.9 606.0,317.2 606.5,317.5 607.0,318.6 607.5,320.3 608.0,320.9 608.5,322.6 609.0,322.9 609.5,324.0 610.0,325.5 610.5,326.8 611.0,327.8 611.5,329.5 612.0,330.9 612.5,332.4 613.0,333.3 613.5,333.7 614.0,334.4 614.5,335.8 615.0,337.4 615.5,337.7 616.0,339.4 616.5,341.1 617.0,343.2 617.5,344.5 618.0,345.4 618.5,346.1 619.0,347.8 619.5,349.9 620.0,351.4 620.5,352.9 621.0,354.0 621.5,355.1 622.0,356.2 622.5,358.4 623.0,358.9 623.5,360.2 624.0,361.2 624.5,361.7 625.0,363.4 625.5,365.1 626.0,366.4 626.5,366.4 627.0,368.4 627.5,369.0 628.0,370.3 628.5,371.0 629.0,371.4 629.5,371.6 630.0,372.2 630.5,373.5 631.0,374.5 631.5,373.8 632.0,372.9 632.5,371.9 633.0,372.4 633.5,371.6 634.0,370.1 634.5,370.3 635.0,369.8 635.5,368.1 636.0,367.5 636.5,365.9 637.0,365.5 637.5,364.0 638.0,363.5 638.5,362.6 639.0,361.2 639.5,360.3 640.0,359.9 640.5,359.5 641.0,358.0 641.5,356.5 642.0,356.0 642.5,355.6 643.0,354.5 643.5,353.3 644.0,351.8 644.5,350.7 645.0,349.5 645.5,348.5 646.0,347.1 646.5,346.2 647.0,346.1 647.5,344.1 648.0,342.6 648.5,341.7 649.0,340.8 649.5,339.5 650.0,338.6 650.5,337.2 651.0,336.7 651.5,336.2 652.0,334.5 652.5,334.1 653.0,333.4 653.5,332.4 654.0,331.9 654.5,331.7 655.0,330.2 655.5,329.2 656.0,327.9 656.5,326.7 657.0,327.3 657.5,327.0 658.0,325.2 658.5,322.7 659.0,322.2 659.5,322.8 660.0,321.6 660.5,321.5 661.0,320.2 661.5,320.0 662.0,320.7 662.5,321.6 663.0,322.5 663.5,324.4 664.0,325.2 664.5,326.4 665.0,326.8 665.5,328.5 666.0,328.6 666.5,330.2 667.0,331.5 667.5,332.4 668.0,332.6 668.5,333.1 669.0,335.3 669.5,335.6 670.0,337.3 670.5,338.5 671.0,338.1 671.5,339.0 672.0,340.8 672.5,342.8 673.0,343.5 673.5,344.7 674.0,345.6 674.5,346.5 675.0,348.0 675.5,349.6 676.0,351.4 676.5,351.8 677.0,353.4 677.5,354.5 678.0,355.2 678.5,355.7 679.0,356.8 679.5,358.3 680.0,359.9 680.5,360.2 681.0,361.3 681.5,362.7 682.0,364.1 682.5,365.8 683.0,366.5 683.5,367.6 684.0,367.6 684.5,368.3 685.0,368.8 685.5,370.2 686.0,370.6 686.5,371.1 687.0,371.1 687.5,371.9 688.0,373.6 688.5,373.8 689.0,373.8 689.5,374.0 690.0,372.5 690.5,372.0 691.0,370.5 691.5,369.6 692.0,368.7 692.5,368.6 693.0,367.9 693.5,365.9 694.0,364.7 694.5,363.5 695.0,363.8 695.5,362.3 696.0,361.0 696.5,359.3 697.0,359.4 697.5,358.3 698.0,355.8 698.5,354.4 699.0,353.2 699.5,352.6 700.0,351.5 700.5,350.7 701.0,351.2 701.5,350.3 702.0,349.7 702.5,348.3 703.0,347.0 703.5,345.4 704.0,343.7 704.5,342.4 705.0,341.0 705.5,339.6 706.0,337.8 706.5,338.1 707.0,336.8 707.5,336.5 708.0,335.6 708.5,333.6 709.0,332.7 709.5,332.6 710.0,331.8 710.5,330.3 711.0,328.4 711.5,327.9 712.0,327.7 712.5,326.6 713.0,325.9 713.5,326.0 714.0,324.8 714.5,323.2 715.0,323.1 715.5,321.2 716.0,321.5 716.5,321.1 717.0,320.7 717.5,320.3 718.0,318.6 718.5,320.3 719.0,322.1 719.5,323.3 720.0,322.9 720.5,324.4 721.0,325.9 721.5,326.5 722.0,326.3 722.5,327.8 723.0,329.2 723.5,329.4 724.0,329.6 724.5,331.0 725.0,332.6 725.5,333.8 726.0,335.1 726.5,335.8 727.0,336.7 727.5,339.1 728.0,340.1 728.5,341.1 729.0,342.3 729.5,342.9 730.0,344.5 730.5,347.1 731.0,348.6 731.5,349.9 732.0,350.3 732.5,351.7 733.0,352.1 733.5,353.3 734.0,354.6 734.5,356.3 735.0,357.1 735.5,359.2 736.0,360.6 736.5,361.3 737.0,363.0 737.5,363.6 738.0,364.7 738.5,366.4 739.0,367.4 739.5,368.4 740.0,370.3 740.5,370.1 741.0,370.2 741.5,369.9 742.0,370.7 742.5,372.6 743.0,373.7 743.5,373.0 744.0,372.6 744.5,372.5 745.0,371.2 745.5,370.5 746.0,369.0 746.5,369.1 747.0,368.8 747.5,367.9 748.0,367.2 748.5,365.8 749.0,364.6 749.5,363.6 750.0,362.9 750.5,362.0 751.0,362.0 751.5,360.4 752.0,360.2 752.5,358.8 753.0,359.0 753.5,357.2 754.0,355.8 754.5,354.8 755.0,354.5 755.5,354.6 756.0,352.6 756.5,351.8 757.0,349.8 757.5,349.4 758.0,348.5 758.5,347.4 759.0,347.0 759.5,345.7 760.0,345.1 760.5,344.9 761.0,344.2 761.5,342.1 762.0,340.9 762.5,340.1 763.0,338.9 763.5,337.5 764.0,337.0 764.5,335.8 765.0,335.4 765.5,334.8 766.0,333.8 766.5,332.0 767.0,331.8 767.5,331.1 768.0,330.3 768.5,329.9 769.0,329.3 769.5,328.0 770.0,327.6 770.5,327.8 771.0,325.7 771.5,324.9 772.0,324.4 772.5,324.0 773.0,322.8" fill="none" stroke="#1A7AD8" stroke-width="1.35"/><polyline points="95.0,291.2 95.5,290.1 96.0,288.5 96.5,287.2 97.0,285.8 97.5,284.7 98.0,283.5 98.5,282.0 99.0,280.7 99.5,279.6 100.0,281.0 100.5,281.9 101.0,283.2 101.5,283.5 102.0,284.3 102.5,284.6 103.0,285.2 103.5,286.1 104.0,286.9 104.5,288.1 105.0,289.1 105.5,289.6 106.0,290.4 106.5,290.8 107.0,291.5 107.5,292.2 108.0,292.5 108.5,292.4 109.0,293.4 109.5,294.2 110.0,295.0 110.5,294.8 111.0,295.3 111.5,295.7 112.0,296.6 112.5,297.0 113.0,296.4 113.5,296.2 114.0,295.2 114.5,294.1 115.0,293.6 115.5,292.3 116.0,290.8 116.5,289.8 117.0,289.1 117.5,287.7 118.0,286.5 118.5,285.7 119.0,284.8 119.5,283.6 120.0,282.5 120.5,281.3 121.0,280.2 121.5,281.3 122.0,282.0 122.5,282.8 123.0,283.1 123.5,283.9 124.0,284.8 124.5,285.9 125.0,286.3 125.5,287.3 126.0,287.7 126.5,288.8 127.0,289.2 127.5,289.9 128.0,290.7 128.5,291.5 129.0,292.3 129.5,292.3 130.0,293.0 130.5,293.8 131.0,294.0 131.5,294.6 132.0,295.3 132.5,296.0 133.0,295.9 133.5,296.6 134.0,296.4 134.5,295.5 135.0,294.9 135.5,294.4 136.0,294.0 136.5,292.7 137.0,291.9 137.5,290.1 138.0,289.7 138.5,288.6 139.0,287.4 139.5,286.7 140.0,285.3 140.5,284.2 141.0,282.8 141.5,281.7 142.0,280.8 142.5,282.2 143.0,282.8 143.5,283.6 144.0,283.8 144.5,284.4 145.0,285.3 145.5,286.5 146.0,287.0 146.5,287.9 147.0,288.4 147.5,289.1 148.0,288.9 148.5,289.9 149.0,291.1 149.5,292.1 150.0,292.8 150.5,294.1 151.0,294.1 151.5,294.5 152.0,295.2 152.5,295.3 153.0,296.3 153.5,296.9 154.0,296.8 154.5,296.3 155.0,295.7 155.5,294.7 156.0,293.9 156.5,292.9 157.0,290.9 157.5,289.6 158.0,288.8 158.5,288.2 159.0,286.7 159.5,286.2 160.0,285.1 160.5,283.6 161.0,282.4 161.5,281.2 162.0,280.0 162.5,281.3 163.0,282.3 163.5,283.8 164.0,284.8 164.5,285.3 165.0,285.5 165.5,286.0 166.0,286.4 166.5,287.4 167.0,288.0 167.5,288.5 168.0,289.6 168.5,289.9 169.0,290.7 169.5,291.1 170.0,291.3 170.5,292.0 171.0,292.9 171.5,293.2 172.0,294.0 172.5,294.9 173.0,295.1 173.5,295.8 174.0,296.5 174.5,297.2 175.0,296.8 175.5,295.1 176.0,294.4 176.5,293.8 177.0,293.0 177.5,291.4 178.0,290.4 178.5,289.9 179.0,289.5 179.5,288.2 180.0,286.7 180.5,285.4 181.0,284.0 181.5,282.9 182.0,281.3 182.5,281.2 183.0,280.0 183.5,281.0 184.0,282.1 184.5,283.2 185.0,283.8 185.5,284.9 186.0,285.9 186.5,285.8 187.0,287.0 187.5,288.0 188.0,288.8 188.5,289.0 189.0,289.6 189.5,290.2 190.0,290.4 190.5,291.2 191.0,292.1 191.5,292.8 192.0,293.6 192.5,294.2 193.0,294.3 193.5,295.2 194.0,296.1 194.5,296.0 195.0,296.1 195.5,295.2 196.0,294.4 196.5,293.6 197.0,293.2 197.5,292.3 198.0,291.8 198.5,290.9 199.0,289.7 199.5,288.6 200.0,287.5 200.5,286.4 201.0,284.8 201.5,284.1 202.0,282.4 202.5,281.2 203.0,280.0 203.5,281.6 204.0,282.9 204.5,283.9 205.0,284.1 205.5,285.1 206.0,285.5 206.5,286.4 207.0,287.1 207.5,287.8 208.0,288.8 208.5,289.2 209.0,289.6 209.5,289.8 210.0,290.4 210.5,291.3 211.0,291.8 211.5,291.9 212.0,292.7 212.5,293.7 213.0,294.4 213.5,295.2 214.0,296.2 214.5,296.5 215.0,297.3 215.5,297.7 216.0,297.1 216.5,295.7 217.0,294.9 217.5,294.0 218.0,293.2 218.5,292.6 219.0,291.7 219.5,290.2 220.0,289.3 220.5,288.7 221.0,287.8 221.5,286.4 222.0,285.0 222.5,283.6 223.0,282.2 223.5,281.0 224.0,279.9 224.5,281.7 225.0,282.9 225.5,283.9 226.0,284.3 226.5,285.9 227.0,286.2 227.5,286.9 228.0,287.7 228.5,287.9 229.0,288.6 229.5,289.3 230.0,290.3 230.5,291.2 231.0,291.4 231.5,292.5 232.0,292.9 232.5,293.3 233.0,294.0 233.5,294.9 234.0,295.1 234.5,295.4 235.0,295.7 235.5,296.2 236.0,297.4 236.5,297.0 237.0,296.2 237.5,295.1 238.0,294.3 238.5,292.9 239.0,292.1 239.5,290.8 240.0,289.4 240.5,287.9 241.0,286.9 241.5,285.7 242.0,284.5 242.5,283.3 243.0,282.1 243.5,280.6 244.0,279.4 244.5,280.3 245.0,281.7 245.5,282.4 246.0,283.6 246.5,284.7 247.0,285.1 247.5,285.8 248.0,286.6 248.5,287.4 249.0,288.3 249.5,288.8 250.0,289.4 250.5,290.5 251.0,291.0 251.5,291.8 252.0,292.2 252.5,292.3 253.0,293.2 253.5,293.5 254.0,294.0 254.5,294.7 255.0,294.9 255.5,295.6 256.0,296.1 256.5,296.9 257.0,296.3 257.5,295.6 258.0,294.6 258.5,294.2 259.0,293.3 259.5,292.0 260.0,291.1 260.5,289.1 261.0,287.8 261.5,287.1 262.0,286.1 262.5,285.0 263.0,284.2 263.5,283.0 264.0,282.2 264.5,280.8 265.0,280.1 265.5,281.5 266.0,282.4 266.5,282.8 267.0,283.4 267.5,284.7 268.0,285.5 268.5,286.3 269.0,287.3 269.5,288.4 270.0,289.1 270.5,289.9 271.0,290.4 271.5,291.1 272.0,291.3 272.5,291.6 273.0,292.0 273.5,292.7 274.0,293.4 274.5,294.0 275.0,294.8 275.5,294.6 276.0,295.5 276.5,296.0 277.0,296.6 277.5,296.5 278.0,294.9 278.5,293.6 279.0,292.9 279.5,292.1 280.0,290.9 280.5,289.9 281.0,289.3 281.5,289.0 282.0,287.5 282.5,286.0 283.0,284.4 283.5,283.3 284.0,282.4 284.5,281.1 285.0,279.7 285.5,281.4 286.0,282.1 286.5,283.1 287.0,284.0 287.5,285.0 288.0,285.9 288.5,286.3 289.0,286.7 289.5,287.1 290.0,288.1 290.5,288.7 291.0,289.1 291.5,289.5 292.0,290.3 292.5,290.8 293.0,290.7 293.5,292.1 294.0,291.9 294.5,292.9 295.0,293.4 295.5,294.0 296.0,294.0 296.5,295.8 297.0,296.2 297.5,296.7 298.0,296.3 298.5,295.7 299.0,294.2 299.5,293.1 300.0,291.9 300.5,290.8 301.0,289.4 301.5,288.2 302.0,286.2 302.5,285.0 303.0,284.4 303.5,282.6 304.0,281.4 304.5,279.4 305.0,278.5 305.5,277.4 306.0,279.5 306.5,281.5 307.0,283.1 307.5,284.6 308.0,285.7 308.5,287.6 309.0,288.9 309.5,290.2 310.0,291.9 310.5,293.6 311.0,295.4 311.5,296.7 312.0,297.7 312.5,299.0 313.0,300.3 313.5,301.2 314.0,302.4 314.5,303.9 315.0,305.4 315.5,307.0 316.0,307.8 316.5,309.0 317.0,310.5 317.5,309.9 318.0,309.3 318.5,308.5 319.0,307.4 319.5,306.6 320.0,306.3 320.5,305.2 321.0,304.1 321.5,303.7 322.0,302.7 322.5,301.5 323.0,300.2 323.5,299.2 324.0,298.0 324.5,296.8 325.0,295.8 325.5,295.5 326.0,296.3 326.5,296.8 327.0,297.3 327.5,297.8 328.0,298.6 328.5,298.5 329.0,298.6 329.5,298.8 330.0,298.6 330.5,299.3 331.0,299.5 331.5,299.6 332.0,299.7 332.5,299.6 333.0,299.7 333.5,299.5 334.0,299.6 334.5,299.7 335.0,300.0 335.5,299.5 336.0,299.8 336.5,300.0 337.0,299.8 337.5,299.7 338.0,300.1 338.5,299.5 339.0,299.2 339.5,298.1 340.0,297.1 340.5,296.1 341.0,296.2 341.5,295.2 342.0,294.1 342.5,293.4 343.0,292.3 343.5,291.0 344.0,289.9 344.5,289.0 345.0,288.4 345.5,286.8 346.0,285.9 346.5,285.2 347.0,284.2 347.5,282.9 348.0,282.1 348.5,282.9 349.0,283.4 349.5,284.0 350.0,285.3 350.5,286.1 351.0,286.4 351.5,287.1 352.0,287.5 352.5,288.3 353.0,288.7 353.5,289.9 354.0,290.1 354.5,290.8 355.0,291.5 355.5,291.8 356.0,292.4 356.5,293.0 357.0,293.4 357.5,294.4 358.0,295.2 358.5,295.5 359.0,296.3 359.5,296.3 360.0,297.1 360.5,296.7 361.0,295.5 361.5,295.0 362.0,293.9 362.5,292.5 363.0,291.6 363.5,290.9 364.0,289.3 364.5,288.3 365.0,287.5 365.5,286.3 366.0,285.1 366.5,283.5 367.0,282.8 367.5,281.5 368.0,280.3 368.5,281.9 369.0,282.8 369.5,284.1 370.0,284.5 370.5,285.7 371.0,285.9 371.5,286.5 372.0,286.9 372.5,287.4 373.0,287.8 373.5,288.7 374.0,289.6 374.5,290.1 375.0,290.8 375.5,291.7 376.0,292.7 376.5,292.7 377.0,293.7 377.5,294.0 378.0,294.5 378.5,295.1 379.0,295.6 379.5,296.7 380.0,297.4 380.5,296.8 381.0,295.4 381.5,295.0 382.0,294.2 382.5,293.6 383.0,292.4 383.5,291.1 384.0,289.4 384.5,288.4 385.0,287.6 385.5,286.4 386.0,285.2 386.5,283.8 387.0,282.0 387.5,280.7 388.0,279.4 388.5,280.7 389.0,281.7 389.5,282.4 390.0,283.3 390.5,284.5 391.0,285.2 391.5,286.2 392.0,287.0 392.5,287.3 393.0,287.9 393.5,289.1 394.0,289.4 394.5,289.7 395.0,290.5 395.5,291.0 396.0,291.8 396.5,292.4 397.0,292.7 397.5,292.9 398.0,293.6 398.5,294.2 399.0,295.1 399.5,295.6 400.0,296.0 400.5,296.4 401.0,295.6 401.5,294.5 402.0,294.6 402.5,293.4 403.0,292.6 403.5,291.5 404.0,290.4 404.5,290.0 405.0,288.6 405.5,287.0 406.0,285.7 406.5,285.1 407.0,284.5 407.5,283.4 408.0,282.0 408.5,280.6 409.0,279.4 409.5,280.9 410.0,282.3 410.5,283.3 411.0,284.4 411.5,284.9 412.0,285.5 412.5,286.1 413.0,287.0 413.5,287.4 414.0,287.1 414.5,288.1 415.0,288.8 415.5,289.8 416.0,290.7 416.5,291.0 417.0,291.9 417.5,292.8 418.0,293.2 418.5,294.1 419.0,294.5 419.5,295.1 420.0,295.2 420.5,295.7 421.0,296.3 421.5,296.6 422.0,296.0 422.5,295.6 423.0,294.3 423.5,293.7 424.0,292.9 424.5,291.8 425.0,290.7 425.5,289.9 426.0,288.5 426.5,286.7 427.0,286.0 427.5,284.6 428.0,283.9 428.5,283.3 429.0,282.1 429.5,281.1 430.0,280.2 430.5,281.6 431.0,282.4 431.5,283.4 432.0,284.1 432.5,285.1 433.0,286.0 433.5,287.0 434.0,287.4 434.5,288.5 435.0,288.9 435.5,289.6 436.0,290.3 436.5,290.7 437.0,291.5 437.5,292.2 438.0,292.6 438.5,293.4 439.0,293.7 439.5,294.3 440.0,294.8 440.5,295.3 441.0,295.6 441.5,296.1 442.0,296.3 442.5,296.4 443.0,295.0 443.5,294.2 444.0,293.8 444.5,292.8 445.0,291.8 445.5,290.7 446.0,289.7 446.5,288.4 447.0,287.2 447.5,285.8 448.0,284.3 448.5,283.0 449.0,282.0 449.5,281.3 450.0,280.2 450.5,281.3 451.0,282.3 451.5,283.3 452.0,284.1 452.5,284.5 453.0,285.9 453.5,286.3 454.0,286.7 454.5,287.2 455.0,288.3 455.5,288.6 456.0,289.7 456.5,290.1 457.0,290.7 457.5,291.3 458.0,292.1 458.5,293.2 459.0,293.7 459.5,294.0 460.0,294.5 460.5,294.8 461.0,296.0 461.5,296.4 462.0,296.7 462.5,295.8 463.0,294.4 463.5,293.5 464.0,292.8 464.5,292.1 465.0,290.5 465.5,289.5 466.0,288.3 466.5,287.5 467.0,286.3 467.5,285.0 468.0,284.1 468.5,283.6 469.0,281.9 469.5,280.2 470.0,282.3 470.5,283.8 471.0,284.9 471.5,286.9 472.0,288.4 472.5,290.2 473.0,291.7 473.5,293.1 474.0,294.3 474.5,295.6 475.0,297.1 475.5,298.0 476.0,299.5 476.5,300.5 477.0,301.9 477.5,302.8 478.0,303.9 478.5,304.6 479.0,305.6 479.5,306.9 480.0,307.8 480.5,309.3 481.0,310.1 481.5,309.7 482.0,308.6 482.5,308.1 483.0,306.8 483.5,306.3 484.0,305.0 484.5,305.1 485.0,304.4 485.5,303.3 486.0,302.3 486.5,300.7 487.0,299.7 487.5,298.2 488.0,297.7 488.5,296.9 489.0,295.2 489.5,294.3 490.0,293.3 490.5,294.1 491.0,295.1 491.5,296.5 492.0,297.0 492.5,297.2 493.0,297.4 493.5,297.7 494.0,299.2 494.5,299.9 495.0,300.4 495.5,301.4 496.0,301.5 496.5,301.9 497.0,301.8 497.5,302.5 498.0,302.2 498.5,302.7 499.0,303.2 499.5,303.8 500.0,303.7 500.5,303.5 501.0,304.0 501.5,304.2 502.0,303.5 502.5,303.9 503.0,304.5 503.5,303.6 504.0,302.3 504.5,300.7 505.0,300.0 505.5,298.6 506.0,296.7 506.5,295.8 507.0,293.4 507.5,292.0 508.0,290.8 508.5,288.8 509.0,286.7 509.5,285.8 510.0,284.1 510.5,282.5 511.0,281.0 511.5,282.2 512.0,283.3 512.5,284.5 513.0,284.7 513.5,285.6 514.0,286.2 514.5,287.6 515.0,288.5 515.5,289.1 516.0,289.6 516.5,289.8 517.0,290.7 517.5,291.3 518.0,292.2 518.5,293.1 519.0,294.0 519.5,294.3 520.0,295.1 520.5,294.8 521.0,295.4 521.5,296.2 522.0,296.8 522.5,297.3 523.0,298.0 523.5,297.5 524.0,297.0 524.5,296.0 525.0,295.1 525.5,294.4 526.0,293.6 526.5,292.2 527.0,290.5 527.5,289.1 528.0,287.9 528.5,286.9 529.0,285.6 529.5,284.0 530.0,283.0 530.5,282.4 531.0,281.3 531.5,282.3 532.0,283.3 532.5,283.8 533.0,284.1 533.5,285.1 534.0,286.7 534.5,286.9 535.0,287.8 535.5,288.0 536.0,288.5 536.5,289.4 537.0,289.8 537.5,290.6 538.0,291.1 538.5,291.7 539.0,292.3 539.5,293.1 540.0,293.7 540.5,293.9 541.0,294.5 541.5,294.7 542.0,295.5 542.5,295.9 543.0,296.5 543.5,297.1 544.0,297.5 544.5,297.5 545.0,297.1 545.5,296.2 546.0,295.2 546.5,294.4 547.0,293.1 547.5,292.4 548.0,291.8 548.5,290.4 549.0,289.3 549.5,288.7 550.0,288.0 550.5,286.6 551.0,285.8 551.5,284.5 552.0,283.5 552.5,283.2 553.0,281.6 553.5,282.0 554.0,283.6 554.5,283.8 555.0,284.9 555.5,285.6 556.0,287.1 556.5,288.0 557.0,289.0 557.5,289.2 558.0,289.9 558.5,290.4 559.0,291.2 559.5,291.3 560.0,292.1 560.5,292.7 561.0,292.7 561.5,293.6 562.0,294.1 562.5,294.6 563.0,295.1 563.5,296.0 564.0,296.4 564.5,296.8 565.0,296.7 565.5,296.1 566.0,295.3 566.5,294.7 567.0,294.1 567.5,293.3 568.0,292.0 568.5,290.9 569.0,290.0 569.5,289.3 570.0,289.0 570.5,287.5 571.0,286.3 571.5,285.3 572.0,283.3 572.5,282.7 573.0,281.7 573.5,282.6 574.0,283.2 574.5,284.4 575.0,284.7 575.5,285.2 576.0,286.0 576.5,287.1 577.0,288.0 577.5,288.6 578.0,289.8 578.5,290.8 579.0,291.5 579.5,291.6 580.0,292.5 580.5,292.7 581.0,292.6 581.5,293.1 582.0,293.5 582.5,294.2 583.0,295.1 583.5,295.7 584.0,296.0 584.5,296.8 585.0,297.1 585.5,297.6 586.0,297.1 586.5,296.8 587.0,296.0 587.5,295.6 588.0,294.7 588.5,293.3 589.0,292.5 589.5,291.4 590.0,291.1 590.5,289.4 591.0,288.5 591.5,287.4 592.0,285.7 592.5,284.2 593.0,283.0 593.5,282.0 594.0,280.5 594.5,281.6 595.0,282.6 595.5,283.8 596.0,284.8 596.5,285.7 597.0,286.5 597.5,287.5 598.0,288.3 598.5,288.5 599.0,288.9 599.5,289.5 600.0,289.8 600.5,290.9 601.0,291.3 601.5,291.8 602.0,292.6 602.5,293.3 603.0,293.6 603.5,294.4 604.0,295.0 604.5,296.0 605.0,296.5 605.5,297.1 606.0,297.7 606.5,297.8 607.0,297.4 607.5,296.6 608.0,295.3 608.5,294.6 609.0,294.1 609.5,293.3 610.0,292.6 610.5,291.5 611.0,290.0 611.5,289.0 612.0,288.2 612.5,287.4 613.0,285.9 613.5,284.9 614.0,283.2 614.5,282.4 615.0,280.9 615.5,282.1 616.0,283.2 616.5,283.8 617.0,285.1 617.5,285.7 618.0,286.3 618.5,287.1 619.0,287.2 619.5,288.6 620.0,289.8 620.5,290.4 621.0,290.6 621.5,291.5 622.0,292.5 622.5,292.9 623.0,293.6 623.5,294.5 624.0,294.2 624.5,295.0 625.0,295.6 625.5,296.6 626.0,297.1 626.5,297.6 627.0,298.3 627.5,297.9 628.0,296.7 628.5,295.6 629.0,294.5 629.5,293.9 630.0,293.3 630.5,291.9 631.0,290.5 631.5,289.0 632.0,287.7 632.5,286.7 633.0,285.9 633.5,284.6 634.0,283.2 634.5,282.1 635.0,280.8 635.5,282.5 636.0,283.4 636.5,284.1 637.0,284.9 637.5,286.1 638.0,286.4 638.5,287.2 639.0,287.7 639.5,288.6 640.0,289.6 640.5,290.7 641.0,291.3 641.5,291.5 642.0,292.5 642.5,293.0 643.0,293.3 643.5,294.4 644.0,294.6 644.5,295.2 645.0,296.1 645.5,296.6 646.0,297.3 646.5,297.6 647.0,298.2 647.5,297.6 648.0,297.0 648.5,296.3 649.0,295.2 649.5,293.7 650.0,292.6 650.5,291.6 651.0,289.9 651.5,289.0 652.0,288.3 652.5,287.2 653.0,286.2 653.5,285.1 654.0,283.7 654.5,282.4 655.0,280.6 655.5,282.1 656.0,283.3 656.5,283.5 657.0,284.2 657.5,285.3 658.0,285.9 658.5,286.7 659.0,287.9 659.5,288.7 660.0,289.3 660.5,290.2 661.0,290.4 661.5,291.0 662.0,291.9 662.5,292.9 663.0,292.8 663.5,293.4 664.0,293.6 664.5,294.9 665.0,295.1 665.5,295.9 666.0,296.1 666.5,296.6 667.0,297.3 667.5,297.7 668.0,297.2 668.5,296.3 669.0,295.3 669.5,293.9 670.0,293.2 670.5,293.1 671.0,291.3 671.5,290.6 672.0,290.5 672.5,288.8 673.0,288.0 673.5,286.9 674.0,285.3 674.5,284.0 675.0,282.4 675.5,281.2 676.0,280.4 676.5,282.1 677.0,283.5 677.5,284.0 678.0,284.8 678.5,285.6 679.0,286.6 679.5,287.4 680.0,288.4 680.5,289.1 681.0,289.4 681.5,290.1 682.0,290.8 682.5,291.6 683.0,291.6 683.5,292.3 684.0,292.9 684.5,293.9 685.0,294.0 685.5,294.7 686.0,295.2 686.5,296.6 687.0,297.0 687.5,298.0 688.0,298.2 688.5,297.2 689.0,296.7 689.5,295.8 690.0,294.5 690.5,293.6 691.0,292.6 691.5,291.4 692.0,290.3 692.5,289.3 693.0,288.1 693.5,286.8 694.0,285.7 694.5,284.2 695.0,282.6 695.5,281.3 696.0,280.7 696.5,282.7 697.0,283.2 697.5,284.1 698.0,285.2 698.5,285.3 699.0,286.4 699.5,286.9 700.0,287.8 700.5,288.6 701.0,289.3 701.5,290.3 702.0,290.5 702.5,291.1 703.0,292.1 703.5,292.8 704.0,293.2 704.5,293.2 705.0,294.2 705.5,295.0 706.0,296.0 706.5,296.3 707.0,296.8 707.5,297.4 708.0,298.5 708.5,297.9 709.0,296.0 709.5,294.6 710.0,293.5 710.5,292.7 711.0,292.1 711.5,291.6 712.0,290.8 712.5,289.1 713.0,288.3 713.5,287.4 714.0,286.2 714.5,285.1 715.0,284.5 715.5,282.9 716.0,282.1 716.5,283.1 717.0,283.6 717.5,284.1 718.0,284.8 718.5,285.5 719.0,286.3 719.5,287.4 720.0,288.4 720.5,289.2 721.0,290.6 721.5,290.7 722.0,291.0 722.5,291.5 723.0,291.9 723.5,292.4 724.0,293.2 724.5,293.5 725.0,293.5 725.5,294.4 726.0,294.6 726.5,295.6 727.0,296.0 727.5,296.6 728.0,297.2 728.5,297.7 729.0,297.6 729.5,296.8 730.0,295.5 730.5,294.7 731.0,293.7 731.5,292.7 732.0,291.9 732.5,291.5 733.0,290.4 733.5,288.9 734.0,287.8 734.5,287.2 735.0,286.0 735.5,284.9 736.0,283.7 736.5,282.4 737.0,281.0 737.5,282.6 738.0,283.6 738.5,285.0 739.0,285.4 739.5,285.6 740.0,286.8 740.5,288.1 741.0,288.6 741.5,289.2 742.0,290.1 742.5,290.6 743.0,291.0 743.5,291.7 744.0,292.3 744.5,292.8 745.0,294.0 745.5,294.7 746.0,295.1 746.5,295.8 747.0,296.0 747.5,296.9 748.0,297.7 748.5,298.0 749.0,298.3 749.5,297.6 750.0,296.4 750.5,295.3 751.0,294.3 751.5,293.6 752.0,292.6 752.5,291.3 753.0,290.5 753.5,289.5 754.0,288.3 754.5,287.0 755.0,286.2 755.5,284.8 756.0,283.6 756.5,282.0 757.0,280.7 757.5,282.1 758.0,283.1 758.5,284.1 759.0,284.6 759.5,285.2 760.0,286.1 760.5,286.8 761.0,288.1 761.5,288.9 762.0,288.9 762.5,288.9 763.0,289.6 763.5,290.1 764.0,290.5 764.5,290.5 765.0,291.4 765.5,292.1 766.0,293.0 766.5,293.4 767.0,294.8 767.5,295.7 768.0,296.1 768.5,296.6 769.0,296.9 769.5,296.3 770.0,296.3 770.5,295.3 771.0,294.7 771.5,293.5 772.0,292.7 772.5,291.8 773.0,290.9" fill="none" stroke="#000" stroke-width="1.3"/></svg><div class="a" style="left:23px;top:933px;width:839px;height:40px;border:1px solid;border-color:#fff #808080 #808080 #fff"></div><div class="btn" style="left:31px;top:941px;width:81px;height:25px;line-height:22px;text-align:center;font-size:12px;white-space:nowrap">ｱﾗｰﾑﾘｾｯﾄ</div><div class="a sunk" style="left:119px;top:942px;width:733px;height:24px;background:#fff"></div><div class="btn" style="left:835px;top:944px;width:15px;height:20px"><svg class="a" style="left:3px;top:7px" width="7" height="4"><path d="M0,0 H7 L3.5,4 Z" fill="#000"/></svg></div><div class="a thin" style="left:15px;top:988px;width:150px;height:19px;line-height:17px;padding-left:2px;font-size:12px">保存ｳｪｲﾄ！！</div><div class="a thin" style="left:167px;top:988px;width:702px;height:19px"></div><svg class="a" style="left:856px;top:994px" width="12" height="12"><path d="M11,1 L1,11 M11,5 L5,11 M11,9 L9,11" stroke="#808080" stroke-width="1.2"/><path d="M11,2 L2,11 M11,6 L6,11 M11,10 L10,11" stroke="#fff" stroke-width="0.8"/></svg><div class="a" style="left:0;top:1020px;width:1680px;height:30px;background:#D4D0C8;border-top:1px solid #D4D0C8"></div><div class="a" style="left:0;top:1021px;width:1680px;height:1px;background:#fff"></div><div class="btn" style="left:2px;top:1024px;width:62px;height:22px"><svg class="a" style="left:2px;top:2px" width="17" height="16"><path d="M2,3 Q4,1 8,3 L7,8 Q4,6 1,8 Z" fill="#E8501C"/><path d="M9,3 Q12,5 16,3 L15,8 Q12,10 8,8 Z" fill="#60B030"/><path d="M1,9 Q4,7 7,9 L6,14 Q3,12 0,14 Z" fill="#3070D8"/><path d="M8,9 Q11,11 15,9 L14,14 Q11,16 7,14 Z" fill="#F0C020"/></svg><div class="a" style="left:19px;top:0;font-weight:bold;font-size:11px;line-height:20px;white-space:nowrap;letter-spacing:-1.3px">スタート</div></div><svg class="a" style="left:72px;top:1028px" width="64" height="17"><circle cx="8" cy="9" r="6" fill="#3090E0"/><path d="M4,9 H12" stroke="#fff" stroke-width="2"/><path d="M3,14 Q8,0 15,3" stroke="#3090E0" stroke-width="1.5" fill="none"/><rect x="24" y="2" width="13" height="13" rx="2" fill="#3080D0"/><rect x="26" y="4" width="9" height="9" fill="#E8F0F8"/><path d="M28,11 L33,6" stroke="#3080D0" stroke-width="1.5"/><path d="M46,5 H52 L54,7 H61 V15 H46 Z" fill="#E8C050" stroke="#A07020" stroke-width="0.8"/><circle cx="54" cy="10" r="3" fill="#C8E0F0" stroke="#606060" stroke-width="0.8"/></svg><div class="btn" style="left:142px;top:1024px;width:160px;height:22px"></div><svg class="a" style="left:146px;top:1027px" width="16" height="16"><rect x="0" y="1" width="16" height="13" fill="#000" stroke="#4060A0"/><rect x="0" y="1" width="16" height="2" fill="#4060A0"/><text x="1.5" y="12" font-size="8" font-family="Liberation Sans" font-weight="bold" fill="#fff">C:\</text></svg><div class="a" style="left:166px;top:1024px;width:132px;overflow:hidden;height:22px;line-height:22px;font-size:12px;font-weight:normal;white-space:nowrap">transfile.cmd へのｼｮｰﾄ...</div><div class="btn" style="left:305px;top:1024px;width:159px;height:22px"></div><svg class="a" style="left:309px;top:1027px" width="16" height="16"><path d="M2,2 L14,4 L13,15 L3,14 Z" fill="#C8D0E0" stroke="#404060"/><path d="M3,5 Q8,10 13,6" stroke="#C03030" stroke-width="2" fill="none"/><path d="M5,3 L7,9 M9,3 L10,8" stroke="#208020"/></svg><div class="a" style="left:329px;top:1024px;width:131px;overflow:hidden;height:22px;line-height:22px;font-size:12px;font-weight:normal;white-space:nowrap">PhotoImpression 2000</div><div class="a" style="left:468px;top:1024px;width:160px;height:22px;border:1px solid;border-color:#404040 #fff #fff #404040;box-shadow:inset 1px 1px #808080;background:repeating-conic-gradient(#fff 0 25%,#D4D0C8 0 50%) 0 0/2px 2px"></div><svg class="a" style="left:472px;top:1027px" width="16" height="16"><rect x="0" y="0" width="16" height="16" fill="#404040"/><rect x="1" y="1" width="14" height="7" fill="#fff"/><path d="M2,5 L6,3 L10,5 L14,3" stroke="#C040C0" fill="none"/><rect x="1" y="9" width="14" height="6" fill="#fff"/><rect x="2" y="10" width="3" height="4" fill="#E00000"/><rect x="6" y="10" width="3" height="4" fill="#0000E0"/><rect x="10" y="10" width="4" height="4" fill="#00C000"/></svg><div class="a" style="left:492px;top:1024px;width:132px;overflow:hidden;height:22px;line-height:22px;font-size:12px;font-weight:bold;white-space:nowrap">ソフトサーモ　E830</div><svg class="a" style="left:1548px;top:1029px" width="13" height="15"><path d="M4,0 Q4,3 7,3 Q10,3 11,5" stroke="#000" fill="none"/><rect x="0.5" y="6.5" width="12" height="7" fill="#fff" stroke="#000"/><path d="M2,9 H11 M2,11 H11" stroke="#000" stroke-dasharray="1 1"/></svg><div class="a" style="left:1564px;top:1024px;width:113px;height:23px;border:1px solid;border-color:#808080 #fff #fff #808080"></div><svg class="a" style="left:1567px;top:1028px" width="70" height="16"><path d="M7,1 L13,3 Q13,11 7,15 Q1,11 1,3 Z" fill="#F0E020" stroke="#606080"/><path d="M7,5 V9 M7,11 V12" stroke="#000" stroke-width="1.5"/><path d="M25,1 L31,3 Q31,11 25,15 Q19,11 19,3 Z" fill="#C02030" stroke="#606080"/><path d="M23,6 L27,10 M27,6 L23,10" stroke="#fff" stroke-width="1.5"/><path d="M38,1 L44,4 L42,8 L38,6 Z" fill="#40B030"/><path d="M40,8 L49,12 L46,16 L38,12 Z" fill="#708090" stroke="#404040" stroke-width="0.5"/><polygon points="62,2 64,7 69,7 65,10 66,15 62,12 58,15 59,10 55,7 60,7" fill="#F8E040" stroke="#B09020" stroke-width="0.6"/></svg><div class="a" style="left:1641px;top:1025px;line-height:20px;font-size:12px">11:49</div></body></html>
